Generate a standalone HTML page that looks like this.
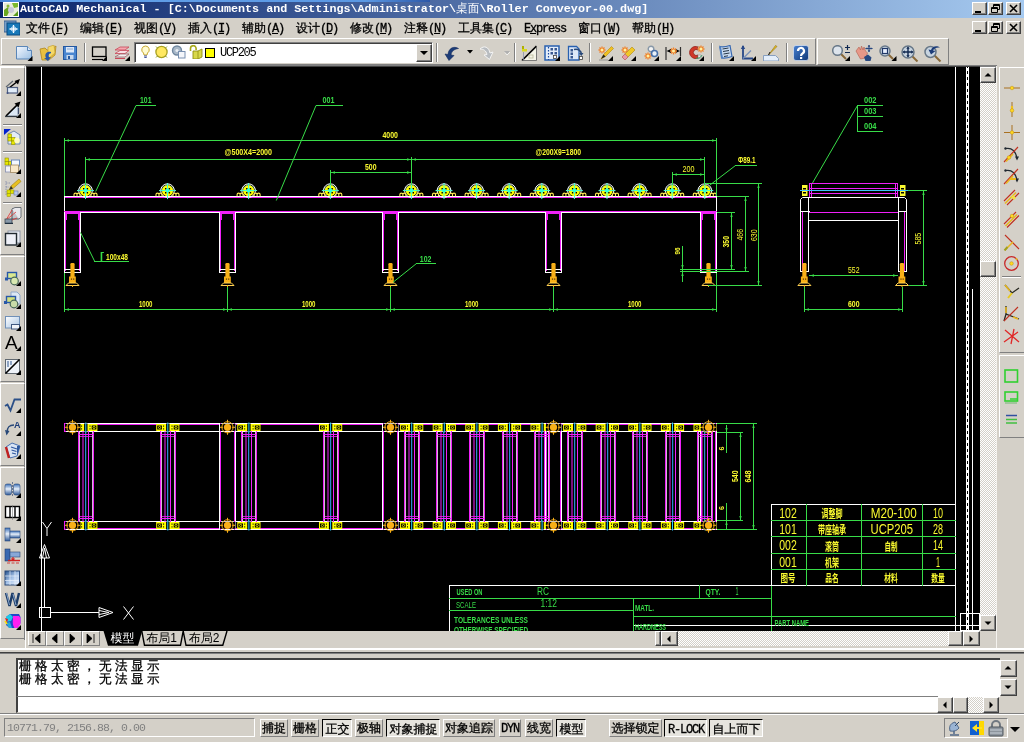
<!DOCTYPE html>
<html lang="zh"><head><meta charset="utf-8"><title>AutoCAD Mechanical - Roller Conveyor-00.dwg</title>
<style>
*{box-sizing:border-box;margin:0;padding:0}
html,body{width:1024px;height:742px;overflow:hidden;background:#d4d0c8;}
body{position:relative;font-family:"Liberation Serif","WenQuanYi Zen Hei",serif;font-size:12px;color:#000;}
.abs{position:absolute}
#title{left:0;top:0;width:1024px;height:18px;background:linear-gradient(90deg,#0a246a 0%,#a6caf0 100%);}
#titletop{left:0;top:0;width:430px;height:2px;background:linear-gradient(90deg,#4a86d8,#62a0e8 10%,#5a98e4 85%,#2c58a8);}
#titletxt{left:20px;top:2px;height:15px;line-height:15px;color:#fff;font-family:"Liberation Mono","WenQuanYi Zen Hei",monospace;font-weight:bold;font-size:11.72px;white-space:pre;letter-spacing:0}
.mono{font-family:"Liberation Mono","WenQuanYi Zen Hei",monospace}
.mi,.sb,.cmd{-webkit-text-stroke:0.3px #000}
.mi{top:20px;height:16px;line-height:16px;font-size:12px;white-space:pre;font-family:"Liberation Serif","WenQuanYi Zen Hei",serif}
.mi i{font-style:normal;font-family:"Liberation Mono",monospace;letter-spacing:-1.2px;font-size:12px}
.mi u{text-decoration:underline}
.cb{width:15px;height:13px;background:#d4d0c8;border:1px solid;border-color:#fff #404040 #404040 #fff;box-shadow:inset -1px -1px 0 #808080}
.raised{background:#d4d0c8;border:1px solid;border-color:#fff #404040 #404040 #fff;box-shadow:inset -1px -1px 0 #808080}
.dither{background-color:#eae8e4;background-image:linear-gradient(45deg,#fff 25%,transparent 25%,transparent 75%,#fff 75%),linear-gradient(45deg,#fff 25%,#d4d0c8 25%,#d4d0c8 75%,#fff 75%);background-size:2px 2px;background-position:0 0,1px 1px}
.sb{top:719px;height:18px;line-height:18px;font-size:12px;text-align:center;white-space:pre;font-family:"Liberation Mono","WenQuanYi Zen Hei",serif}
.sb i{font-style:normal;letter-spacing:-1.2px}
.sb.up{border:1px solid;border-color:#fff #808080 #808080 #fff;background:#d4d0c8}
.sb.dn{border:1px solid;border-color:#000 #fff #fff #000;background:#e6e4de;padding-left:1px;padding-top:1px}
.cmd{font-family:"Liberation Mono","WenQuanYi Zen Hei",monospace;font-size:12.5px;letter-spacing:3.5px;white-space:pre;line-height:13px}
</style></head>
<body>
<div id="root" class="abs" style="left:0;top:0;width:1024px;height:742px;will-change:transform">
<div id="title" class="abs"></div><div id="titletop" class="abs"></div>
<div id="titletxt" class="abs">AutoCAD Mechanical - [C:\Documents and Settings\Administrator\桌面\Roller Conveyor-00.dwg]</div>
<svg class="abs" style="left:3px;top:2px" width="16" height="15" viewBox="0 0 16 15"><rect x="0" y="0" width="16" height="15" fill="#e8ecd8"/><rect x=".5" y=".5" width="15" height="14" fill="none" stroke="#fff"/><path d="M1 14 L1 8 L5 5 L7 8 L4 14Z" fill="#6aa820"/><path d="M9 1 L15 1 L15 5 L11 6Z" fill="#7cb82c"/><path d="M10 14 L15 9 L15 14Z" fill="#5a9a1c"/><circle cx="8" cy="8" r="3" fill="#c8c8d8"/><circle cx="5" cy="4" r="1.5" fill="#88b838"/></svg>
<div class="abs" style="left:0;top:18px;width:1024px;height:20px;background:#d4d0c8"></div>
<svg class="abs" style="left:4px;top:20px" width="16" height="16" viewBox="0 0 16 16"><rect x="0" y="1" width="12" height="11" fill="#7aa0c8" stroke="#3a6090"/><rect x="3" y="3" width="13" height="12" fill="#1878b8" stroke="#0a4a80"/><path d="M9.5 5v8M5.5 9h8" stroke="#fff" stroke-width="1.3"/><circle cx="9.5" cy="9" r="2.3" fill="none" stroke="#cfe8ff"/></svg>
<div class="abs mi" style="left:26px">文件<i>(<u>F</u>)</i></div><div class="abs mi" style="left:80px">编辑<i>(<u>E</u>)</i></div><div class="abs mi" style="left:134px">视图<i>(<u>V</u>)</i></div><div class="abs mi" style="left:188px">插入<i>(<u>I</u>)</i></div><div class="abs mi" style="left:242px">辅助<i>(<u>A</u>)</i></div><div class="abs mi" style="left:296px">设计<i>(<u>D</u>)</i></div><div class="abs mi" style="left:350px">修改<i>(<u>M</u>)</i></div><div class="abs mi" style="left:404px">注释<i>(<u>N</u>)</i></div><div class="abs mi" style="left:458px">工具集<i>(<u>C</u>)</i></div><div class="abs mi" style="left:524px"><i>E<u>x</u>press</i></div><div class="abs mi" style="left:578px">窗口<i>(<u>W</u>)</i></div><div class="abs mi" style="left:632px">帮助<i>(<u>H</u>)</i></div>
<div class="abs cb" style="left:972px;top:2px"></div><div class="abs" style="left:975px;top:11px;width:6px;height:2px;background:#000"></div>
<div class="abs cb" style="left:988px;top:2px"></div><svg class="abs" style="left:988px;top:2px" width="15" height="13"><path d="M5.5 2.5h6v5h-6z M5 3.5h7" fill="none" stroke="#000"/><path d="M3.5 5.5h6v5h-6z" fill="#d4d0c8" stroke="#000"/><path d="M3 6.5h7" stroke="#000"/></svg>
<div class="abs cb" style="left:1006px;top:2px"></div><svg class="abs" style="left:1006px;top:2px" width="15" height="13"><path d="M4 3l7 7M11 3l-7 7" stroke="#000" stroke-width="1.6"/></svg>
<div class="abs cb" style="left:972px;top:21px"></div><div class="abs" style="left:975px;top:30px;width:6px;height:2px;background:#000"></div>
<div class="abs cb" style="left:988px;top:21px"></div><svg class="abs" style="left:988px;top:21px" width="15" height="13"><path d="M5.5 2.5h6v5h-6z M5 3.5h7" fill="none" stroke="#000"/><path d="M3.5 5.5h6v5h-6z" fill="#d4d0c8" stroke="#000"/><path d="M3 6.5h7" stroke="#000"/></svg>
<div class="abs cb" style="left:1006px;top:21px"></div><svg class="abs" style="left:1006px;top:21px" width="15" height="13"><path d="M4 3l7 7M11 3l-7 7" stroke="#000" stroke-width="1.6"/></svg>
<div class="abs" style="left:0;top:38px;width:1024px;height:27px;background:#d4d0c8"></div>
<div class="abs" style="left:1px;top:38px;width:815px;height:27px;border:1px solid;border-color:#fff #808080 #808080 #fff"></div>
<div class="abs" style="left:817px;top:38px;width:132px;height:27px;border:1px solid;border-color:#fff #808080 #808080 #fff"></div>
<svg class="abs" style="left:16px;top:45px" width="17" height="16" viewBox="0 0 17 16"><defs><linearGradient id="gn" x1="0" y1="0" x2="1" y2="1"><stop offset="0" stop-color="#f4f8ff"/><stop offset="1" stop-color="#9cc0e4"/></linearGradient></defs><path d="M.5 1.5h11l4 4v8.500h-15z" fill="url(#gn)" stroke="#5a86b8"/><path d="M11.500 1.500v4h4" fill="#dce8f6" stroke="#5a86b8"/><polygon points="16.500,11 16.500,16 11.500,16" fill="#000"/></svg>
<svg class="abs" style="left:39px;top:45px" width="18" height="16" viewBox="0 0 18 16"><path d="M1 4l5-1l2 2h3l6-4l-1 9l-6 5l-7 0z" fill="#e8c040" stroke="#b08820" stroke-width=".8"/><path d="M9 2l6-2l1 8l-7 6z" fill="#f4d868" stroke="#c09828" stroke-width=".6"/><path d="M12 7c-4-1-7 2-5 6l-2 0l4 3l3-4l-2 .2c-1-2 0-4 2-4z" fill="#2858a8"/></svg>
<svg class="abs" style="left:62px;top:45px" width="16" height="16" viewBox="0 0 16 16"><rect x="1.500" y="1.500" width="13" height="13" fill="#4a86d0" stroke="#2458a0"/><rect x="4" y="2" width="8" height="5.500" fill="#dce8f8"/><path d="M5 4h6" stroke="#88a8d0"/><rect x="4.500" y="10" width="7" height="4.500" fill="#c8d8ec"/><rect x="6" y="11" width="2" height="3" fill="#2458a0"/></svg>
<div class="abs" style="left:84px;top:43px;width:2px;height:19px;border-left:1px solid #808080;border-right:1px solid #fff"></div>
<svg class="abs" style="left:91px;top:45px" width="17" height="16" viewBox="0 0 17 16"><rect x="1.500" y="2" width="13.500" height="9.500" fill="#d4d0c8" stroke="#000" stroke-width="1.300"/><path d="M1 14.500h11" stroke="#000" stroke-width="1.200"/><polygon points="16,11 16,16 11,16" fill="#000"/></svg>
<svg class="abs" style="left:114px;top:45px" width="17" height="16" viewBox="0 0 17 16"><path d="M1 5l5-3h9l-4 3z" fill="#f4a8b0" stroke="#c84858" stroke-width=".8"/><path d="M1 8.500l5-3h9l-4 3z" fill="#f8e0e4" stroke="#c84858" stroke-width=".8"/><path d="M1 12l5-3h9l-4 3z" fill="#f0f0f0" stroke="#a06068" stroke-width=".8"/><path d="M1 13.500h10" stroke="#c84858"/><polygon points="16,11 16,16 11,16" fill="#000"/></svg>
<div class="abs" style="left:134px;top:42px;width:299px;height:21px;background:#fff;border:1px solid;border-color:#808080 #fff #fff #808080;box-shadow:inset 1px 1px 0 #404040"></div>
<svg class="abs" style="left:140px;top:45px" width="76" height="14" viewBox="0 0 76 14"><path d="M5.500 1a3.800 3.800 0 0 0 -2 7l.5 2h3l.5-2a3.800 3.800 0 0 0 -2-7z" fill="#fffbd0" stroke="#c8a830" stroke-width="1"/><path d="M4 11h3M4.300 12.500h2.400" stroke="#4858a0" stroke-width="1.200"/><circle cx="21.500" cy="7" r="5.600" fill="#ffe860" stroke="#a8a020" stroke-width="1.300"/><path d="M16 12.500l1.500-1.500M27 12.500l-1.500-1.500M16 1.500l1.500 1.500M27 1.500l-1.500 1.500" stroke="#90a028" stroke-width="1"/><circle cx="37" cy="5.500" r="4.500" fill="#a8b8c8" stroke="#7088a0" stroke-width="1.400"/><circle cx="37" cy="5.500" r="1.600" fill="#e8eef4"/><rect x="38.500" y="6.500" width="6.500" height="6.500" fill="#f4f6fa" stroke="#7890b0"/><path d="M50.500 6v-2.500a2.800 2.800 0 0 1 5.600 0v1.500" fill="none" stroke="#a8a818" stroke-width="1.600"/><path d="M53 6h5l4-2v8l-4 2h-5z" fill="#d8d848" stroke="#909010" stroke-width=".9"/><path d="M58 6v8" stroke="#909010" stroke-width=".8"/><rect x="65.500" y="3.500" width="9" height="9" fill="#ffff00" stroke="#000"/></svg>
<div class="abs" style="left:220px;top:45px;font-family:'Liberation Mono',monospace;font-size:12px;letter-spacing:-1.300px;line-height:16px;white-space:pre">UCP205</div>
<div class="abs raised" style="left:416px;top:44px;width:16px;height:18px"></div><svg class="abs" style="left:416px;top:44px" width="16" height="18" viewBox="0 0 16 18"><polygon points="4,7 12,7 8,11" fill="#000"/></svg>
<div class="abs" style="left:436px;top:43px;width:2px;height:19px;border-left:1px solid #808080;border-right:1px solid #fff"></div>
<svg class="abs" style="left:443px;top:45px" width="17" height="16" viewBox="0 0 17 16"><path d="M15.500 3.500c-5-3-10 0-10.500 6l-3-.5l4 6.500l5-5l-3-.5c.5-4 3.500-6 7.500-6.500z" fill="#1c3c78" stroke="#10285a" stroke-width=".6"/></svg>
<svg class="abs" style="left:467px;top:50px" width="6" height="4" viewBox="0 0 6 4"><polygon points="0,0 6,0 3,3.500" fill="#000"/></svg>
<svg class="abs" style="left:479px;top:45px" width="17" height="16" viewBox="0 0 17 16"><path d="M1 4c4-4 9-2 10 4l3-1l-3.500 7.500l-5.500-4.500l3 -.5c-1-4-3.500-5.500-7-5.500z" fill="#b8bcc0" stroke="#f4f4f4" stroke-width="1"/></svg>
<svg class="abs" style="left:504px;top:51px" width="6" height="4" viewBox="0 0 6 4"><polygon points="0,0 6,0 3,3.500" fill="#b0b0b0"/><path d="M1 1.500l2 2.500l3-3" stroke="#fff" fill="none" stroke-width=".7"/></svg>
<div class="abs" style="left:514px;top:43px;width:2px;height:19px;border-left:1px solid #808080;border-right:1px solid #fff"></div>
<svg class="abs" style="left:521px;top:45px" width="16" height="16" viewBox="0 0 16 16"><path d="M1 15.500h14v-14z" fill="#f4f4e8"/><path d="M1 15.500L15.500 1" stroke="#000" stroke-width="1.600"/><path d="M1 15.500h14.500V1" fill="none" stroke="#606060" stroke-width=".8"/><rect x="1" y="1" width="2" height="5" fill="#b0b000"/><rect x="1" y="4" width="5" height="2.500" fill="#d8d820"/><path d="M2.500 7v8" stroke="#8890a8" stroke-width=".8"/><rect x="8" y="10" width="4" height="3" fill="none" stroke="#b8b898" stroke-width=".8"/></svg>
<svg class="abs" style="left:544px;top:45px" width="17" height="16" viewBox="0 0 17 16"><rect x="1" y="1" width="14" height="14" fill="#e4eefa" stroke="#2860b0" stroke-width="1.500"/><path d="M4.500 2v13" stroke="#1848a0" stroke-width="1.200" stroke-dasharray="1.500 1.500"/><g fill="#385890"><rect x="6.500" y="3" width="2.500" height="2.500"/><rect x="10.500" y="3" width="2.500" height="2.500"/><rect x="6.500" y="7" width="2.500" height="2.500"/><rect x="10.500" y="7" width="2.500" height="2.500"/></g><rect x="9.500" y="10.500" width="3" height="3" fill="#fff" stroke="#404040" stroke-width=".8"/><polygon points="16,11 16,16 11,16" fill="#000"/></svg>
<svg class="abs" style="left:567px;top:45px" width="17" height="16" viewBox="0 0 17 16"><path d="M1.500 1.500h8l2.500 2.500v11h-10.500z" fill="#dce8f8" stroke="#2860b0" stroke-width="1.300"/><g fill="#385890"><rect x="3.500" y="4" width="2.500" height="2.500"/><rect x="3.500" y="7.500" width="2.500" height="2.500"/><rect x="3.500" y="11" width="2.500" height="2.500"/></g><path d="M7 4.500c4-1 7 1 7.500 4.500" fill="none" stroke="#284878" stroke-width="1.600"/><polygon points="12,8 16.500,8 14.300,11" fill="#284878"/><rect x="12.500" y="11.500" width="3" height="3" fill="#fff" stroke="#404040" stroke-width=".8"/></svg>
<div class="abs" style="left:589px;top:43px;width:2px;height:19px;border-left:1px solid #808080;border-right:1px solid #fff"></div>
<svg class="abs" style="left:597px;top:45px" width="17" height="16" viewBox="0 0 17 16"><g stroke="#f08028" stroke-width="1.300"><path d="M5 1.5v7M1.5 5h7M2.5 2.5l5 5M7.5 2.5l-5 5"/></g><circle cx="5" cy="5" r="1.500" fill="#fff0a0"/><path d="M4 14l2.500-4.500l8-8l2 2l-8 8z" fill="#f0c020" stroke="#b08810" stroke-width=".6"/><path d="M4 14l2.500-4.500l2 2z" fill="#202020"/><path d="M2 15h9" stroke="#808080" stroke-width="1.500" opacity=".5"/><polygon points="16,11 16,16 11,16" fill="#000"/></svg>
<svg class="abs" style="left:620px;top:45px" width="17" height="16" viewBox="0 0 17 16"><g stroke="#f08028" stroke-width="1.300"><path d="M5 1.5v7M1.5 5h7M2.5 2.5l5 5M7.5 2.5l-5 5"/></g><circle cx="5" cy="5" r="1.500" fill="#fff0a0"/><path d="M2 12l10-10l3 3l-10 10z" fill="#f0c828" stroke="#b08810" stroke-width=".6"/><path d="M2 12l3-3l3 3l-3 3z" fill="#e898a8" stroke="#b06070" stroke-width=".6"/><polygon points="16,11 16,16 11,16" fill="#000"/></svg>
<svg class="abs" style="left:643px;top:45px" width="17" height="16" viewBox="0 0 17 16"><g stroke="#f08028" stroke-width="1.300"><path d="M5 7.5v7M1.5 11h7M2.5 8.5l5 5M7.5 8.5l-5 5"/></g><circle cx="5" cy="11" r="1.500" fill="#fff0a0"/><circle cx="8" cy="4" r="2.800" fill="#f4f4f4" stroke="#8898a8" stroke-width="1.400"/><circle cx="11.500" cy="8.500" r="3" fill="#e8f0f8" stroke="#4870a8" stroke-width="1.600"/><polygon points="16,11 16,16 11,16" fill="#000"/></svg>
<svg class="abs" style="left:665px;top:45px" width="17" height="16" viewBox="0 0 17 16"><path d="M1 2v13M15.500 2v9" stroke="#303030" stroke-width="1.200"/><polygon points="1.500,6 6,4 6,8" fill="#000"/><polygon points="15,6 10.500,4 10.500,8" fill="#000"/><g stroke="#f08028" stroke-width="1.300"><path d="M8.5 2.5v7M5 6h7M6 3.5l5 5M11 3.5l-5 5"/></g><circle cx="8.5" cy="6" r="1.500" fill="#fff0a0"/><polygon points="16,11 16,16 11,16" fill="#000"/></svg>
<svg class="abs" style="left:688px;top:45px" width="17" height="16" viewBox="0 0 17 16"><path d="M10 2a6 6 0 1 0 0 11l0-3a3 3 0 1 1 0-5z" fill="#d03828" stroke="#902018" stroke-width=".8"/><path d="M10 2h3v3h-3zM10 10h3v3h-3z" fill="#e8e8e8" stroke="#808080" stroke-width=".5"/><path d="M8 13c3 1 5-1 6-3" stroke="#30a060" fill="none"/><g stroke="#f08028" stroke-width="1.300"><path d="M13 0.5v7M9.5 4h7M10.5 1.5l5 5M15.5 1.5l-5 5"/></g><circle cx="13" cy="4" r="1.500" fill="#fff0a0"/><polygon points="16,11 16,16 11,16" fill="#000"/></svg>
<div class="abs" style="left:711px;top:43px;width:2px;height:19px;border-left:1px solid #808080;border-right:1px solid #fff"></div>
<svg class="abs" style="left:718px;top:45px" width="17" height="16" viewBox="0 0 17 16"><path d="M2 1.500c3 1 7 0 10-1l2 11c-3 1-7 2-10 1.500z" fill="#c8daf0" stroke="#3868b0" stroke-width="1.200"/><path d="M4.500 4l6-1M5 6.500l6-1M5.500 9l6-1M6 11.500l4-.7" stroke="#283848" stroke-width="1"/><path d="M2 1.500l2 12" stroke="#5080c0" stroke-width="1.800"/><polygon points="16,11 16,16 11,16" fill="#000"/></svg>
<svg class="abs" style="left:740px;top:45px" width="17" height="16" viewBox="0 0 17 16"><path d="M3 1v12.500h10" fill="none" stroke="#284888" stroke-width="1.800"/><polygon points="3,0 .8,4 5.200,4" fill="#284888"/><path d="M3 13.500l8-8" stroke="#7890b8" stroke-width="1.200"/><polygon points="16,11 16,16 11,16" fill="#000"/></svg>
<svg class="abs" style="left:762px;top:45px" width="19" height="16" viewBox="0 0 19 16"><path d="M1.500 10.500h12l3 3v2.500h-15z" fill="#e4eefa" stroke="#88a0c0"/><path d="M6.500 10l7-9.500l1.500 1z" fill="#e8c020" stroke="#907010" stroke-width=".6"/><path d="M6.500 10l1.500-3" stroke="#202020" stroke-width="1"/></svg>
<div class="abs" style="left:786px;top:43px;width:2px;height:19px;border-left:1px solid #808080;border-right:1px solid #fff"></div>
<svg class="abs" style="left:793px;top:45px" width="16" height="16" viewBox="0 0 16 16"><defs><linearGradient id="gh" x1="0" y1="0" x2="1" y2="1"><stop offset="0" stop-color="#4880d0"/><stop offset="1" stop-color="#103878"/></linearGradient></defs><rect x=".5" y=".5" width="15" height="15" rx="2.500" fill="url(#gh)" stroke="#e8f0ff" stroke-width=".6"/><path d="M5 6a3 3 0 1 1 4.500 2.500c-1 .6-1.500 1-1.500 2.500" fill="none" stroke="#fff" stroke-width="2.200"/><rect x="7" y="12" width="2.200" height="2" fill="#fff"/></svg>
<svg class="abs" style="left:832px;top:45px" width="19" height="16" viewBox="0 0 19 16"><path d="M9 9L14 14" stroke="#886838" stroke-width="2"/><circle cx="5.5" cy="5.5" r="4.8" fill="#dde4ec" stroke="#687888" stroke-width="1.500"/><path d="M13 2.500h5M15.500 0v5M13 7.500h5" stroke="#102850" stroke-width="1.200"/><polygon points="18,11 18,16 13,16" fill="#000"/></svg>
<svg class="abs" style="left:855px;top:45px" width="18" height="16" viewBox="0 0 18 16"><path d="M1 6l3-4l1.500 3l1-4l1.500 4l1-3l1.500 4l2 2l-2 5l-5 1z" fill="#e89888" stroke="#b86858" stroke-width=".7"/><path d="M9 12l4-2.500l3.500 3l-1 3.500h-5z" fill="#284880"/><path d="M14 0v7M10.500 3.500h7" stroke="#284880" stroke-width="1.200"/><path d="M14 0l-1.300 1.800h2.600zM14 7l-1.300-1.800h2.600zM10.500 3.500l1.800-1.300v2.600zM17.500 3.500l-1.800-1.300v2.600z" fill="#284880"/></svg>
<svg class="abs" style="left:879px;top:45px" width="18" height="16" viewBox="0 0 18 16"><path d="M9.5 9.5L14 14" stroke="#886838" stroke-width="2"/><circle cx="6" cy="6" r="5" fill="#c8d4e0" stroke="#687888" stroke-width="1.500"/><rect x="3.500" y="3.500" width="5" height="5" fill="#e8f0ff" stroke="#203868" stroke-width="1.200"/><polygon points="17.500,11 17.500,16 12.500,16" fill="#000"/></svg>
<svg class="abs" style="left:901px;top:45px" width="19" height="17" viewBox="0 0 19 17"><path d="M11 11L16.5 16.5" stroke="#886838" stroke-width="2"/><circle cx="7" cy="7" r="6" fill="#c8d4e0" stroke="#687888" stroke-width="1.500"/><path d="M7 2.500v9M2.500 7h9" stroke="#102850" stroke-width="1.400"/><path d="M7 1.500l-1.700 2.200h3.400zM7 12.500l-1.700-2.200h3.400zM1.500 7l2.200-1.700v3.400zM12.500 7l-2.200-1.700v3.400z" fill="#102850"/></svg>
<svg class="abs" style="left:924px;top:45px" width="19" height="17" viewBox="0 0 19 17"><path d="M10 10L16.5 16.5" stroke="#886838" stroke-width="2"/><circle cx="6.5" cy="7" r="5.5" fill="#c8d4e0" stroke="#687888" stroke-width="1.500"/><path d="M16 2.500c-3-2.500-8-1.500-9 2.500l-2.500-.5l2.500 5l4.500-3.500l-2.500-.5c1-2.500 4-3.500 7-3z" fill="#1c3c78"/></svg>

<div class="abs" style="left:25px;top:65px;width:972px;height:583px;background:#d4d0c8;border-left:1px solid #fff;border-top:2px solid #808080"></div>
<div class="abs" style="left:26px;top:66px;width:954px;height:565px;background:#404040"></div>
<div class="abs" style="left:27px;top:67px;width:953px;height:564px;background:#000"></div>
<svg class="abs" style="left:0;top:0;will-change:transform" width="1024" height="742" viewBox="0 0 1024 742">
<defs><clipPath id="dc"><rect x="27" y="67" width="953" height="564"/></clipPath>
<g id="brg"><circle cx="0" cy="0" r="5.6" fill="#ffff00"/><circle cx="0" cy="0" r="6.8" fill="none" stroke="#fff" stroke-width="1"/><path d="M-2.5 -2.5h1.4v1.4h-1.4zM1.2 -2.5h1.4v1.4h-1.4zM-2.5 1.4h1.4v1.4h-1.4zM1.2 1.4h1.4v1.4h-1.4z" fill="#000"/><circle cx="0" cy="0" r="2" fill="#00ffff"/><path d="M-8.5 0h17M0 -7.5v16" stroke="#40ffd0" stroke-width="1"/><path d="M-8 0L0 -7L8 0" fill="none" stroke="#9ff" stroke-width=".6" opacity=".7"/><g fill="none" stroke="#ffe850" stroke-width="1.100"><path d="M-11.500 5.600v-1.600a1.500 1.500 0 0 1 3 0v1.600M-8.500 5.600v-1.600a1.500 1.500 0 0 1 3 0v1.600M11.500 5.600v-1.600a1.500 1.500 0 0 0 -3 0v1.600M8.500 5.600v-1.600a1.500 1.500 0 0 0 -3 0v1.600"/></g></g>
<g id="foot"><rect x="-2.100" y="0" width="4.200" height="15" rx="1.200" fill="#f8b018"/><rect x="-3.5" y="13.500" width="6.800" height="6.500" fill="#f8b018"/><rect x="-1.600" y="15.500" width="1.200" height="1.200" fill="#503000"/><rect x=".6" y="15.500" width="1.200" height="1.200" fill="#503000"/><path d="M-6.500 22.500L-4 20H4L6.500 22.500z" fill="none" stroke="#ffd050" stroke-width="1"/><path d="M0 22v2" stroke="#f8b018"/></g>
<g id="pb"><rect x="-11.600" y="-3.500" width="23.200" height="7" fill="#ffff00"/><rect x="-1.700" y="-4" width="3.400" height="8" fill="#000"/><rect x="-10.600" y="-2" width="4.700" height="4" fill="#000"/><rect x="5.900" y="-2" width="4.700" height="4" fill="#000"/><g fill="#000"><rect x="-4.700" y="-2" width="1" height="1.200"/><rect x="-4.700" y=".8" width="1" height="1.200"/><rect x="3.700" y="-2" width="1" height="1.200"/><rect x="3.700" y=".8" width="1" height="1.200"/></g><circle cx="-8.200" cy="0" r="1.100" fill="none" stroke="#ffff00" stroke-width=".8"/><circle cx="8.200" cy="0" r="1.100" fill="none" stroke="#ffff00" stroke-width=".8"/><path d="M0 -5v10" stroke="#30d0ff"/></g>
<g id="pf"><rect x="-7.500" y="-3.500" width="15.500" height="7" fill="#000"/><circle r="3.600" fill="#f8b018"/><circle r="5.600" fill="none" stroke="#f8b018" stroke-width="1"/><path d="M-7.500 0h3M4.500 0h3M0 -7.500v3M0 4.500v3" stroke="#f8b018" stroke-width="1"/></g>
</defs>
<g clip-path="url(#dc)">
<rect x="41" y="67" width="1" height="565" fill="#ffffff"/><rect x="955" y="67" width="1" height="565" fill="#ffffff"/><rect x="972" y="289" width="1" height="343" fill="#ffffff"/><rect x="966" y="67" width="3" height="564" fill="#fff"/><line x1="967.5" y1="67" x2="967.5" y2="631" stroke="#000" stroke-width="1" stroke-dasharray="3 3" stroke-dashoffset="2"/>
<rect x="64" y="196" width="653" height="1" fill="#ffffff"/><rect x="64" y="197" width="653" height="1" fill="#f020f8"/><rect x="64" y="196" width="1" height="17" fill="#ffffff"/><rect x="716" y="196" width="1" height="17" fill="#ffffff"/><rect x="64" y="211" width="653" height="1" fill="#f020f8"/><rect x="64" y="212" width="653" height="1" fill="#ffffff"/><rect x="64" y="211" width="17" height="3" fill="#f020f8"/><rect x="64" y="212" width="1" height="61" fill="#ffffff"/><rect x="80" y="212" width="1" height="61" fill="#ffffff"/><rect x="65" y="212" width="1" height="59" fill="#f020f8"/><rect x="79" y="212" width="1" height="59" fill="#f020f8"/><rect x="65" y="212" width="2" height="8" fill="#f020f8"/><rect x="78" y="212" width="2" height="8" fill="#f020f8"/><rect x="64" y="269" width="17" height="1" fill="#ffffff"/><rect x="64" y="272" width="17" height="1" fill="#ffffff"/><rect x="219" y="211" width="17" height="3" fill="#f020f8"/><rect x="219" y="212" width="1" height="61" fill="#ffffff"/><rect x="235" y="212" width="1" height="61" fill="#ffffff"/><rect x="220" y="212" width="1" height="59" fill="#f020f8"/><rect x="234" y="212" width="1" height="59" fill="#f020f8"/><rect x="220" y="212" width="2" height="8" fill="#f020f8"/><rect x="233" y="212" width="2" height="8" fill="#f020f8"/><rect x="219" y="269" width="17" height="1" fill="#ffffff"/><rect x="219" y="272" width="17" height="1" fill="#ffffff"/><rect x="382" y="211" width="17" height="3" fill="#f020f8"/><rect x="382" y="212" width="1" height="61" fill="#ffffff"/><rect x="398" y="212" width="1" height="61" fill="#ffffff"/><rect x="383" y="212" width="1" height="59" fill="#f020f8"/><rect x="397" y="212" width="1" height="59" fill="#f020f8"/><rect x="383" y="212" width="2" height="8" fill="#f020f8"/><rect x="396" y="212" width="2" height="8" fill="#f020f8"/><rect x="382" y="269" width="17" height="1" fill="#ffffff"/><rect x="382" y="272" width="17" height="1" fill="#ffffff"/><rect x="545" y="211" width="17" height="3" fill="#f020f8"/><rect x="545" y="212" width="1" height="61" fill="#ffffff"/><rect x="561" y="212" width="1" height="61" fill="#ffffff"/><rect x="546" y="212" width="1" height="59" fill="#f020f8"/><rect x="560" y="212" width="1" height="59" fill="#f020f8"/><rect x="546" y="212" width="2" height="8" fill="#f020f8"/><rect x="559" y="212" width="2" height="8" fill="#f020f8"/><rect x="545" y="269" width="17" height="1" fill="#ffffff"/><rect x="545" y="272" width="17" height="1" fill="#ffffff"/><rect x="700" y="211" width="17" height="3" fill="#f020f8"/><rect x="700" y="212" width="1" height="61" fill="#ffffff"/><rect x="716" y="212" width="1" height="61" fill="#ffffff"/><rect x="701" y="212" width="1" height="59" fill="#f020f8"/><rect x="715" y="212" width="1" height="59" fill="#f020f8"/><rect x="701" y="212" width="2" height="8" fill="#f020f8"/><rect x="714" y="212" width="2" height="8" fill="#f020f8"/><rect x="700" y="269" width="17" height="1" fill="#ffffff"/><rect x="700" y="272" width="17" height="1" fill="#ffffff"/><use href="#foot" x="72.5" y="263"/><use href="#foot" x="227.5" y="263"/><use href="#foot" x="390.5" y="263"/><use href="#foot" x="553.5" y="263"/><use href="#foot" x="708.5" y="263"/>
<use href="#brg" x="85.5" y="190.6"/><use href="#brg" x="167.5" y="190.6"/><use href="#brg" x="248.6" y="190.6"/><use href="#brg" x="330.3" y="190.6"/><use href="#brg" x="411.4" y="190.6"/><use href="#brg" x="444" y="190.6"/><use href="#brg" x="476.6" y="190.6"/><use href="#brg" x="509.2" y="190.6"/><use href="#brg" x="541.8" y="190.6"/><use href="#brg" x="574.4" y="190.6"/><use href="#brg" x="607" y="190.6"/><use href="#brg" x="639.6" y="190.6"/><use href="#brg" x="672.2" y="190.6"/><use href="#brg" x="704.8" y="190.6"/>
<rect x="64" y="138" width="1" height="58" fill="#38dc48"/><rect x="716" y="138" width="1" height="58" fill="#38dc48"/><rect x="64" y="140" width="653" height="1" fill="#38dc48"/><path d="M65 140.5l4 -1.2v2.4z" fill="#38dc48"/><path d="M716 140.5l-4 -1.2v2.4z" fill="#38dc48"/><text x="382.5" y="137.9" textLength="15.5" lengthAdjust="spacingAndGlyphs" font-size="9.3" font-family="'Liberation Sans',sans-serif" font-weight="bold" fill="#fafa30">4000</text><rect x="85" y="157" width="1" height="28" fill="#38dc48"/><rect x="704" y="157" width="1" height="28" fill="#38dc48"/><rect x="411" y="157" width="1" height="28" fill="#38dc48"/><rect x="85" y="159" width="620" height="1" fill="#38dc48"/><path d="M86 159.5l4 -1.2v2.4z" fill="#38dc48"/><path d="M704 159.5l-4 -1.2v2.4z" fill="#38dc48"/><path d="M411 159.5l-4 -1.2v2.4z" fill="#38dc48"/><path d="M412 159.5l4 -1.2v2.4z" fill="#38dc48"/><text x="224.5" y="154.9" textLength="47.5" lengthAdjust="spacingAndGlyphs" font-size="9.3" font-family="'Liberation Sans',sans-serif" font-weight="bold" fill="#fafa30">@500X4=2000</text><text x="535.5" y="154.7" textLength="45.5" lengthAdjust="spacingAndGlyphs" font-size="9.3" font-family="'Liberation Sans',sans-serif" font-weight="bold" fill="#fafa30">@200X9=1800</text><rect x="330" y="170" width="1" height="15" fill="#38dc48"/><rect x="330" y="172" width="82" height="1" fill="#38dc48"/><path d="M331 172.5l4 -1.2v2.4z" fill="#38dc48"/><path d="M411 172.5l-4 -1.2v2.4z" fill="#38dc48"/><text x="365" y="169.9" textLength="11.5" lengthAdjust="spacingAndGlyphs" font-size="9.3" font-family="'Liberation Sans',sans-serif" font-weight="bold" fill="#fafa30">500</text><rect x="672" y="172" width="1" height="13" fill="#38dc48"/><rect x="672" y="174" width="33" height="1" fill="#38dc48"/><path d="M673 174.5l4 -1.2v2.4z" fill="#38dc48"/><path d="M704 174.5l-4 -1.2v2.4z" fill="#38dc48"/><text x="682.5" y="172.2" textLength="12" lengthAdjust="spacingAndGlyphs" font-size="8.2" font-family="'Liberation Sans',sans-serif" font-weight="normal" fill="#fafa30">200</text><line x1="136" y1="105.5" x2="95.7" y2="191.5" stroke="#38dc48" stroke-width="1"/><rect x="136" y="105" width="20" height="1" fill="#38dc48"/><text x="140" y="102.9" textLength="11.5" lengthAdjust="spacingAndGlyphs" font-size="9.3" font-family="'Liberation Sans',sans-serif" font-weight="bold" fill="#38dc48">101</text><line x1="316" y1="105.5" x2="276.3" y2="200.5" stroke="#38dc48" stroke-width="1"/><rect x="316" y="105" width="27" height="1" fill="#38dc48"/><text x="322.5" y="102.9" textLength="12" lengthAdjust="spacingAndGlyphs" font-size="9.3" font-family="'Liberation Sans',sans-serif" font-weight="bold" fill="#38dc48">001</text><line x1="735.5" y1="165.5" x2="710" y2="185" stroke="#38dc48" stroke-width="1"/><rect x="735" y="165" width="22" height="1" fill="#38dc48"/><text x="738" y="162.9" textLength="17.5" lengthAdjust="spacingAndGlyphs" font-size="9.3" font-family="'Liberation Sans',sans-serif" font-weight="bold" fill="#fafa30">Φ89.1</text><line x1="80.5" y1="232.5" x2="94.5" y2="261" stroke="#38dc48" stroke-width="1"/><rect x="94" y="261" width="35" height="1" fill="#38dc48"/><text x="100" y="260.2" textLength="4" lengthAdjust="spacingAndGlyphs" font-size="10.5" font-family="'Liberation Sans',sans-serif" font-weight="bold" fill="#38dc48">[</text><text x="106" y="260" textLength="22" lengthAdjust="spacingAndGlyphs" font-size="9.3" font-family="'Liberation Sans',sans-serif" font-weight="bold" fill="#fafa30">100x48</text><line x1="393" y1="282.3" x2="416.5" y2="263.5" stroke="#38dc48" stroke-width="1"/><rect x="416" y="263" width="20" height="1" fill="#38dc48"/><text x="419.8" y="262" textLength="11.6" lengthAdjust="spacingAndGlyphs" font-size="9.3" font-family="'Liberation Sans',sans-serif" font-weight="bold" fill="#38dc48">102</text>
<rect x="706" y="183" width="56" height="1" fill="#38dc48"/><rect x="717" y="196" width="32" height="1" fill="#38dc48"/><rect x="717" y="212" width="18" height="1" fill="#38dc48"/><rect x="680" y="269" width="55" height="1" fill="#38dc48"/><rect x="680" y="271" width="69" height="1" fill="#38dc48"/><rect x="708" y="285" width="54" height="1" fill="#38dc48"/><rect x="731" y="212" width="1" height="58" fill="#38dc48"/><path d="M731.5 213l-1.2 4h2.4z" fill="#38dc48"/><path d="M731.5 269l-1.2 -4h2.4z" fill="#38dc48"/><rect x="745" y="196" width="1" height="76" fill="#38dc48"/><path d="M745.5 197l-1.2 4h2.4z" fill="#38dc48"/><path d="M745.5 271l-1.2 -4h2.4z" fill="#38dc48"/><rect x="758" y="183" width="1" height="103" fill="#38dc48"/><path d="M758.5 184l-1.2 4h2.4z" fill="#38dc48"/><path d="M758.5 285l-1.2 -4h2.4z" fill="#38dc48"/><rect x="682" y="246" width="1" height="36" fill="#38dc48"/><path d="M682.5 269l-1.2 -4h2.4z" fill="#38dc48"/><path d="M682.5 272l-1.2 4h2.4z" fill="#38dc48"/><text x="729" y="247.5" textLength="11.5" lengthAdjust="spacingAndGlyphs" font-size="9.3" font-family="'Liberation Sans',sans-serif" font-weight="bold" fill="#fafa30" transform="rotate(-90 729 247.5)">350</text><text x="743.2" y="240.5" textLength="11.5" lengthAdjust="spacingAndGlyphs" font-size="9.3" font-family="'Liberation Sans',sans-serif" font-weight="normal" fill="#fafa30" transform="rotate(-90 743.2 240.5)">466</text><text x="756.7" y="241" textLength="11.5" lengthAdjust="spacingAndGlyphs" font-size="9.3" font-family="'Liberation Sans',sans-serif" font-weight="normal" fill="#fafa30" transform="rotate(-90 756.7 241)">630</text><text x="679.7" y="254.5" textLength="7" lengthAdjust="spacingAndGlyphs" font-size="7.5" font-family="'Liberation Sans',sans-serif" font-weight="bold" fill="#fafa30" transform="rotate(-90 679.7 254.5)">96</text><rect x="64" y="309" width="653" height="1" fill="#38dc48"/><rect x="64" y="273" width="1" height="39" fill="#38dc48"/><rect x="227" y="287" width="1" height="25" fill="#38dc48"/><rect x="390" y="287" width="1" height="25" fill="#38dc48"/><rect x="553" y="287" width="1" height="25" fill="#38dc48"/><rect x="716" y="273" width="1" height="39" fill="#38dc48"/><path d="M65 309.5l4 -1.2v2.4z" fill="#38dc48"/><path d="M227 309.5l-4 -1.2v2.4z" fill="#38dc48"/><path d="M228 309.5l4 -1.2v2.4z" fill="#38dc48"/><path d="M390 309.5l-4 -1.2v2.4z" fill="#38dc48"/><path d="M391 309.5l4 -1.2v2.4z" fill="#38dc48"/><path d="M553 309.5l-4 -1.2v2.4z" fill="#38dc48"/><path d="M554 309.5l4 -1.2v2.4z" fill="#38dc48"/><path d="M716 309.5l-4 -1.2v2.4z" fill="#38dc48"/><text x="139" y="307.4" textLength="13.5" lengthAdjust="spacingAndGlyphs" font-size="9.3" font-family="'Liberation Sans',sans-serif" font-weight="bold" fill="#fafa30">1000</text><text x="302" y="307.4" textLength="13.5" lengthAdjust="spacingAndGlyphs" font-size="9.3" font-family="'Liberation Sans',sans-serif" font-weight="bold" fill="#fafa30">1000</text><text x="465" y="307.4" textLength="13.5" lengthAdjust="spacingAndGlyphs" font-size="9.3" font-family="'Liberation Sans',sans-serif" font-weight="bold" fill="#fafa30">1000</text><text x="628" y="307.4" textLength="13.5" lengthAdjust="spacingAndGlyphs" font-size="9.3" font-family="'Liberation Sans',sans-serif" font-weight="bold" fill="#fafa30">1000</text>
<rect x="809.5" y="183.5" width="88" height="14" fill="none" stroke="#f020f8"/><rect x="809" y="188" width="89" height="1" fill="#f020f8"/><rect x="809" y="193" width="89" height="1" fill="#f020f8"/><rect x="811" y="183" width="1" height="15" fill="#f020f8"/><rect x="895" y="183" width="1" height="15" fill="#f020f8"/><rect x="802" y="185" width="5.5" height="11" fill="#fafa30"/><rect x="900" y="185" width="5.5" height="11" fill="#fafa30"/><rect x="803" y="188" width="3" height="1.5" fill="#000"/><rect x="901" y="188" width="3" height="1.5" fill="#000"/><rect x="803" y="192" width="3" height="1.5" fill="#000"/><rect x="901" y="192" width="3" height="1.5" fill="#000"/><rect x="800" y="190" width="108" height="1" fill="#40c0ff"/><path d="M800.5 271.5V199.5L802.5 197.5H904.5L906.5 199.5V271.5" fill="none" stroke="#fff"/><rect x="800" y="211" width="10" height="1" fill="#ffffff"/><rect x="898" y="211" width="9" height="1" fill="#ffffff"/><rect x="809" y="212" width="90" height="1" fill="#f020f8"/><rect x="808" y="198" width="1" height="74" fill="#ffffff"/><rect x="898" y="198" width="1" height="74" fill="#ffffff"/><rect x="802" y="212" width="1" height="59" fill="#f020f8"/><rect x="904" y="212" width="1" height="59" fill="#f020f8"/><rect x="808" y="220" width="91" height="1" fill="#ffffff"/><rect x="800" y="271" width="9" height="1" fill="#ffffff"/><rect x="898" y="271" width="9" height="1" fill="#ffffff"/><use href="#foot" x="804.4" y="263"/><use href="#foot" x="902" y="263"/><rect x="809" y="275" width="89" height="1" fill="#38dc48"/><path d="M810 275.5l4 -1.2v2.4z" fill="#38dc48"/><path d="M897 275.5l-4 -1.2v2.4z" fill="#38dc48"/><text x="848" y="272.9" textLength="11.5" lengthAdjust="spacingAndGlyphs" font-size="9.3" font-family="'Liberation Sans',sans-serif" font-weight="normal" fill="#fafa30">552</text><rect x="804" y="287" width="1" height="25" fill="#38dc48"/><rect x="902" y="287" width="1" height="25" fill="#38dc48"/><rect x="804" y="309" width="99" height="1" fill="#38dc48"/><path d="M805 309.5l4 -1.2v2.4z" fill="#38dc48"/><path d="M902 309.5l-4 -1.2v2.4z" fill="#38dc48"/><text x="848" y="307.4" textLength="11.5" lengthAdjust="spacingAndGlyphs" font-size="9.3" font-family="'Liberation Sans',sans-serif" font-weight="bold" fill="#fafa30">600</text><rect x="908" y="190" width="19" height="1" fill="#38dc48"/><rect x="909" y="285" width="18" height="1" fill="#38dc48"/><rect x="923" y="190" width="1" height="96" fill="#38dc48"/><path d="M923.5 191l-1.2 4h2.4z" fill="#38dc48"/><path d="M923.5 285l-1.2 -4h2.4z" fill="#38dc48"/><text x="921.2" y="244.5" textLength="11.8" lengthAdjust="spacingAndGlyphs" font-size="9.3" font-family="'Liberation Sans',sans-serif" font-weight="normal" fill="#fafa30" transform="rotate(-90 921.2 244.5)">585</text><line x1="857.5" y1="105.5" x2="812.5" y2="183" stroke="#38dc48" stroke-width="1"/><rect x="857" y="105" width="1" height="27" fill="#38dc48"/><rect x="857" y="105" width="26" height="1" fill="#38dc48"/><rect x="857" y="116" width="26" height="1" fill="#38dc48"/><rect x="857" y="131" width="26" height="1" fill="#38dc48"/><text x="864" y="102.9" textLength="12.5" lengthAdjust="spacingAndGlyphs" font-size="9.3" font-family="'Liberation Sans',sans-serif" font-weight="bold" fill="#38dc48">002</text><text x="864" y="114.2" textLength="12.5" lengthAdjust="spacingAndGlyphs" font-size="9.3" font-family="'Liberation Sans',sans-serif" font-weight="bold" fill="#38dc48">003</text><text x="864" y="128.7" textLength="12.5" lengthAdjust="spacingAndGlyphs" font-size="9.3" font-family="'Liberation Sans',sans-serif" font-weight="bold" fill="#38dc48">004</text>
<rect x="64" y="423" width="653" height="1" fill="#ffffff"/><rect x="64" y="424" width="653" height="1" fill="#f020f8"/><rect x="64" y="431" width="653" height="1" fill="#ffffff"/><rect x="64" y="521" width="653" height="1" fill="#ffffff"/><rect x="64" y="528" width="653" height="1" fill="#f020f8"/><rect x="64" y="529" width="653" height="1" fill="#ffffff"/><rect x="64" y="423" width="2" height="9" fill="#f020f8"/><rect x="64" y="521" width="2" height="9" fill="#f020f8"/><rect x="716" y="423" width="1" height="9" fill="#ffffff"/><rect x="716" y="521" width="1" height="9" fill="#ffffff"/><rect x="219" y="423" width="1" height="107" fill="#ffffff"/><rect x="235" y="423" width="1" height="107" fill="#ffffff"/><rect x="220" y="423" width="1" height="107" fill="#f020f8"/><rect x="234" y="423" width="1" height="107" fill="#f020f8"/><rect x="382" y="423" width="1" height="107" fill="#ffffff"/><rect x="398" y="423" width="1" height="107" fill="#ffffff"/><rect x="383" y="423" width="1" height="107" fill="#f020f8"/><rect x="397" y="423" width="1" height="107" fill="#f020f8"/><rect x="545" y="423" width="1" height="107" fill="#ffffff"/><rect x="561" y="423" width="1" height="107" fill="#ffffff"/><rect x="546" y="423" width="1" height="107" fill="#f020f8"/><rect x="560" y="423" width="1" height="107" fill="#f020f8"/><rect x="700" y="423" width="1" height="107" fill="#ffffff"/><rect x="716" y="423" width="1" height="107" fill="#ffffff"/><rect x="701" y="423" width="1" height="107" fill="#f020f8"/><rect x="715" y="423" width="1" height="107" fill="#f020f8"/><rect x="78" y="431" width="1.5" height="91" fill="#f020f8"/><rect x="92.5" y="431" width="1.5" height="91" fill="#f020f8"/><rect x="79" y="431" width="0.7" height="91" fill="#ffffff"/><rect x="92.3" y="431" width="0.7" height="91" fill="#ffffff"/><rect x="82.5" y="431" width="1" height="91" fill="#f020f8"/><rect x="88" y="431" width="1" height="91" fill="#f020f8"/><rect x="85.2" y="424" width="1" height="105" fill="#30b0ff"/><rect x="78" y="434" width="16" height="1" fill="#f020f8"/><rect x="78" y="518" width="16" height="1" fill="#f020f8"/><rect x="80" y="436" width="12" height="0.8" fill="#f020f8"/><rect x="80" y="516" width="12" height="0.8" fill="#f020f8"/><rect x="160" y="431" width="1.5" height="91" fill="#f020f8"/><rect x="174.5" y="431" width="1.5" height="91" fill="#f020f8"/><rect x="161" y="431" width="0.7" height="91" fill="#ffffff"/><rect x="174.3" y="431" width="0.7" height="91" fill="#ffffff"/><rect x="164.5" y="431" width="1" height="91" fill="#f020f8"/><rect x="170" y="431" width="1" height="91" fill="#f020f8"/><rect x="167.2" y="424" width="1" height="105" fill="#30b0ff"/><rect x="160" y="434" width="16" height="1" fill="#f020f8"/><rect x="160" y="518" width="16" height="1" fill="#f020f8"/><rect x="162" y="436" width="12" height="0.8" fill="#f020f8"/><rect x="162" y="516" width="12" height="0.8" fill="#f020f8"/><rect x="241" y="431" width="1.5" height="91" fill="#f020f8"/><rect x="255.5" y="431" width="1.5" height="91" fill="#f020f8"/><rect x="242" y="431" width="0.7" height="91" fill="#ffffff"/><rect x="255.3" y="431" width="0.7" height="91" fill="#ffffff"/><rect x="245.5" y="431" width="1" height="91" fill="#f020f8"/><rect x="251" y="431" width="1" height="91" fill="#f020f8"/><rect x="248.2" y="424" width="1" height="105" fill="#30b0ff"/><rect x="241" y="434" width="16" height="1" fill="#f020f8"/><rect x="241" y="518" width="16" height="1" fill="#f020f8"/><rect x="243" y="436" width="12" height="0.8" fill="#f020f8"/><rect x="243" y="516" width="12" height="0.8" fill="#f020f8"/><rect x="323" y="431" width="1.5" height="91" fill="#f020f8"/><rect x="337.5" y="431" width="1.5" height="91" fill="#f020f8"/><rect x="324" y="431" width="0.7" height="91" fill="#ffffff"/><rect x="337.3" y="431" width="0.7" height="91" fill="#ffffff"/><rect x="327.5" y="431" width="1" height="91" fill="#f020f8"/><rect x="333" y="431" width="1" height="91" fill="#f020f8"/><rect x="330.2" y="424" width="1" height="105" fill="#30b0ff"/><rect x="323" y="434" width="16" height="1" fill="#f020f8"/><rect x="323" y="518" width="16" height="1" fill="#f020f8"/><rect x="325" y="436" width="12" height="0.8" fill="#f020f8"/><rect x="325" y="516" width="12" height="0.8" fill="#f020f8"/><rect x="404" y="431" width="1.5" height="91" fill="#f020f8"/><rect x="418.5" y="431" width="1.5" height="91" fill="#f020f8"/><rect x="405" y="431" width="0.7" height="91" fill="#ffffff"/><rect x="418.3" y="431" width="0.7" height="91" fill="#ffffff"/><rect x="408.5" y="431" width="1" height="91" fill="#f020f8"/><rect x="414" y="431" width="1" height="91" fill="#f020f8"/><rect x="411.2" y="424" width="1" height="105" fill="#30b0ff"/><rect x="404" y="434" width="16" height="1" fill="#f020f8"/><rect x="404" y="518" width="16" height="1" fill="#f020f8"/><rect x="406" y="436" width="12" height="0.8" fill="#f020f8"/><rect x="406" y="516" width="12" height="0.8" fill="#f020f8"/><rect x="436" y="431" width="1.5" height="91" fill="#f020f8"/><rect x="450.5" y="431" width="1.5" height="91" fill="#f020f8"/><rect x="437" y="431" width="0.7" height="91" fill="#ffffff"/><rect x="450.3" y="431" width="0.7" height="91" fill="#ffffff"/><rect x="440.5" y="431" width="1" height="91" fill="#f020f8"/><rect x="446" y="431" width="1" height="91" fill="#f020f8"/><rect x="443.2" y="424" width="1" height="105" fill="#30b0ff"/><rect x="436" y="434" width="16" height="1" fill="#f020f8"/><rect x="436" y="518" width="16" height="1" fill="#f020f8"/><rect x="438" y="436" width="12" height="0.8" fill="#f020f8"/><rect x="438" y="516" width="12" height="0.8" fill="#f020f8"/><rect x="469" y="431" width="1.5" height="91" fill="#f020f8"/><rect x="483.5" y="431" width="1.5" height="91" fill="#f020f8"/><rect x="470" y="431" width="0.7" height="91" fill="#ffffff"/><rect x="483.3" y="431" width="0.7" height="91" fill="#ffffff"/><rect x="473.5" y="431" width="1" height="91" fill="#f020f8"/><rect x="479" y="431" width="1" height="91" fill="#f020f8"/><rect x="476.2" y="424" width="1" height="105" fill="#30b0ff"/><rect x="469" y="434" width="16" height="1" fill="#f020f8"/><rect x="469" y="518" width="16" height="1" fill="#f020f8"/><rect x="471" y="436" width="12" height="0.8" fill="#f020f8"/><rect x="471" y="516" width="12" height="0.8" fill="#f020f8"/><rect x="502" y="431" width="1.5" height="91" fill="#f020f8"/><rect x="516.5" y="431" width="1.5" height="91" fill="#f020f8"/><rect x="503" y="431" width="0.7" height="91" fill="#ffffff"/><rect x="516.3" y="431" width="0.7" height="91" fill="#ffffff"/><rect x="506.5" y="431" width="1" height="91" fill="#f020f8"/><rect x="512" y="431" width="1" height="91" fill="#f020f8"/><rect x="509.2" y="424" width="1" height="105" fill="#30b0ff"/><rect x="502" y="434" width="16" height="1" fill="#f020f8"/><rect x="502" y="518" width="16" height="1" fill="#f020f8"/><rect x="504" y="436" width="12" height="0.8" fill="#f020f8"/><rect x="504" y="516" width="12" height="0.8" fill="#f020f8"/><rect x="534" y="431" width="1.5" height="91" fill="#f020f8"/><rect x="548.5" y="431" width="1.5" height="91" fill="#f020f8"/><rect x="535" y="431" width="0.7" height="91" fill="#ffffff"/><rect x="548.3" y="431" width="0.7" height="91" fill="#ffffff"/><rect x="538.5" y="431" width="1" height="91" fill="#f020f8"/><rect x="544" y="431" width="1" height="91" fill="#f020f8"/><rect x="541.2" y="424" width="1" height="105" fill="#30b0ff"/><rect x="534" y="434" width="16" height="1" fill="#f020f8"/><rect x="534" y="518" width="16" height="1" fill="#f020f8"/><rect x="536" y="436" width="12" height="0.8" fill="#f020f8"/><rect x="536" y="516" width="12" height="0.8" fill="#f020f8"/><rect x="567" y="431" width="1.5" height="91" fill="#f020f8"/><rect x="581.5" y="431" width="1.5" height="91" fill="#f020f8"/><rect x="568" y="431" width="0.7" height="91" fill="#ffffff"/><rect x="581.3" y="431" width="0.7" height="91" fill="#ffffff"/><rect x="571.5" y="431" width="1" height="91" fill="#f020f8"/><rect x="577" y="431" width="1" height="91" fill="#f020f8"/><rect x="574.2" y="424" width="1" height="105" fill="#30b0ff"/><rect x="567" y="434" width="16" height="1" fill="#f020f8"/><rect x="567" y="518" width="16" height="1" fill="#f020f8"/><rect x="569" y="436" width="12" height="0.8" fill="#f020f8"/><rect x="569" y="516" width="12" height="0.8" fill="#f020f8"/><rect x="600" y="431" width="1.5" height="91" fill="#f020f8"/><rect x="614.5" y="431" width="1.5" height="91" fill="#f020f8"/><rect x="601" y="431" width="0.7" height="91" fill="#ffffff"/><rect x="614.3" y="431" width="0.7" height="91" fill="#ffffff"/><rect x="604.5" y="431" width="1" height="91" fill="#f020f8"/><rect x="610" y="431" width="1" height="91" fill="#f020f8"/><rect x="607.2" y="424" width="1" height="105" fill="#30b0ff"/><rect x="600" y="434" width="16" height="1" fill="#f020f8"/><rect x="600" y="518" width="16" height="1" fill="#f020f8"/><rect x="602" y="436" width="12" height="0.8" fill="#f020f8"/><rect x="602" y="516" width="12" height="0.8" fill="#f020f8"/><rect x="632" y="431" width="1.5" height="91" fill="#f020f8"/><rect x="646.5" y="431" width="1.5" height="91" fill="#f020f8"/><rect x="633" y="431" width="0.7" height="91" fill="#ffffff"/><rect x="646.3" y="431" width="0.7" height="91" fill="#ffffff"/><rect x="636.5" y="431" width="1" height="91" fill="#f020f8"/><rect x="642" y="431" width="1" height="91" fill="#f020f8"/><rect x="639.2" y="424" width="1" height="105" fill="#30b0ff"/><rect x="632" y="434" width="16" height="1" fill="#f020f8"/><rect x="632" y="518" width="16" height="1" fill="#f020f8"/><rect x="634" y="436" width="12" height="0.8" fill="#f020f8"/><rect x="634" y="516" width="12" height="0.8" fill="#f020f8"/><rect x="665" y="431" width="1.5" height="91" fill="#f020f8"/><rect x="679.5" y="431" width="1.5" height="91" fill="#f020f8"/><rect x="666" y="431" width="0.7" height="91" fill="#ffffff"/><rect x="679.3" y="431" width="0.7" height="91" fill="#ffffff"/><rect x="669.5" y="431" width="1" height="91" fill="#f020f8"/><rect x="675" y="431" width="1" height="91" fill="#f020f8"/><rect x="672.2" y="424" width="1" height="105" fill="#30b0ff"/><rect x="665" y="434" width="16" height="1" fill="#f020f8"/><rect x="665" y="518" width="16" height="1" fill="#f020f8"/><rect x="667" y="436" width="12" height="0.8" fill="#f020f8"/><rect x="667" y="516" width="12" height="0.8" fill="#f020f8"/><rect x="697" y="431" width="1.5" height="91" fill="#f020f8"/><rect x="711.5" y="431" width="1.5" height="91" fill="#f020f8"/><rect x="698" y="431" width="0.7" height="91" fill="#ffffff"/><rect x="711.3" y="431" width="0.7" height="91" fill="#ffffff"/><rect x="701.5" y="431" width="1" height="91" fill="#f020f8"/><rect x="707" y="431" width="1" height="91" fill="#f020f8"/><rect x="704.2" y="424" width="1" height="105" fill="#30b0ff"/><rect x="697" y="434" width="16" height="1" fill="#f020f8"/><rect x="697" y="518" width="16" height="1" fill="#f020f8"/><rect x="699" y="436" width="12" height="0.8" fill="#f020f8"/><rect x="699" y="516" width="12" height="0.8" fill="#f020f8"/><use href="#pb" x="85.8" y="427.5"/><use href="#pb" x="85.8" y="525.5"/><use href="#pb" x="167.8" y="427.5"/><use href="#pb" x="167.8" y="525.5"/><use href="#pb" x="248.9" y="427.5"/><use href="#pb" x="248.9" y="525.5"/><use href="#pb" x="330.6" y="427.5"/><use href="#pb" x="330.6" y="525.5"/><use href="#pb" x="411.7" y="427.5"/><use href="#pb" x="411.7" y="525.5"/><use href="#pb" x="444.3" y="427.5"/><use href="#pb" x="444.3" y="525.5"/><use href="#pb" x="476.9" y="427.5"/><use href="#pb" x="476.9" y="525.5"/><use href="#pb" x="509.5" y="427.5"/><use href="#pb" x="509.5" y="525.5"/><use href="#pb" x="542.1" y="427.5"/><use href="#pb" x="542.1" y="525.5"/><use href="#pb" x="574.7" y="427.5"/><use href="#pb" x="574.7" y="525.5"/><use href="#pb" x="607.3" y="427.5"/><use href="#pb" x="607.3" y="525.5"/><use href="#pb" x="639.9" y="427.5"/><use href="#pb" x="639.9" y="525.5"/><use href="#pb" x="672.5" y="427.5"/><use href="#pb" x="672.5" y="525.5"/><use href="#pb" x="705.1" y="427.5"/><use href="#pb" x="705.1" y="525.5"/>
<use href="#pf" x="72.5" y="427.3"/><use href="#pf" x="72.5" y="525.3"/><use href="#pf" x="227.5" y="427.3"/><use href="#pf" x="227.5" y="525.3"/><use href="#pf" x="390.5" y="427.3"/><use href="#pf" x="390.5" y="525.3"/><use href="#pf" x="553.5" y="427.3"/><use href="#pf" x="553.5" y="525.3"/><use href="#pf" x="708.5" y="427.3"/><use href="#pf" x="708.5" y="525.3"/>
<rect x="717" y="423" width="40" height="1" fill="#38dc48"/><rect x="717" y="432" width="26" height="1" fill="#38dc48"/><rect x="717" y="520" width="26" height="1" fill="#38dc48"/><rect x="717" y="529" width="40" height="1" fill="#38dc48"/><rect x="753" y="423" width="1" height="107" fill="#38dc48"/><path d="M753.5 424l-1.2 4h2.4z" fill="#38dc48"/><path d="M753.5 529l-1.2 -4h2.4z" fill="#38dc48"/><rect x="740" y="432" width="1" height="89" fill="#38dc48"/><path d="M740.5 433l-1.2 4h2.4z" fill="#38dc48"/><path d="M740.5 520l-1.2 -4h2.4z" fill="#38dc48"/><rect x="726" y="425" width="1" height="28" fill="#38dc48"/><rect x="726" y="503" width="1" height="27" fill="#38dc48"/><path d="M726.5 432l-1.2 -4h2.4z" fill="#38dc48"/><path d="M726.5 521l-1.2 4h2.4z" fill="#38dc48"/><text x="737.7" y="482" textLength="11.5" lengthAdjust="spacingAndGlyphs" font-size="9.3" font-family="'Liberation Sans',sans-serif" font-weight="bold" fill="#fafa30" transform="rotate(-90 737.7 482)">540</text><text x="751.2" y="482.5" textLength="12" lengthAdjust="spacingAndGlyphs" font-size="9.3" font-family="'Liberation Sans',sans-serif" font-weight="bold" fill="#fafa30" transform="rotate(-90 751.2 482.5)">648</text><text x="723.7" y="450.5" textLength="4" lengthAdjust="spacingAndGlyphs" font-size="8" font-family="'Liberation Sans',sans-serif" font-weight="bold" fill="#fafa30" transform="rotate(-90 723.7 450.5)">6</text><text x="723.7" y="510" textLength="4" lengthAdjust="spacingAndGlyphs" font-size="8" font-family="'Liberation Sans',sans-serif" font-weight="bold" fill="#fafa30" transform="rotate(-90 723.7 510)">6</text>
<rect x="771" y="504" width="185" height="1" fill="#ffffff"/><rect x="771" y="504" width="1" height="82" fill="#ffffff"/><rect x="449" y="585" width="507" height="1" fill="#ffffff"/><rect x="449" y="585" width="1" height="47" fill="#ffffff"/><rect x="771" y="520" width="185" height="1" fill="#38dc48"/><rect x="771" y="536" width="185" height="1" fill="#38dc48"/><rect x="771" y="553" width="185" height="1" fill="#38dc48"/><rect x="771" y="569" width="185" height="1" fill="#38dc48"/><rect x="806" y="504" width="1" height="82" fill="#38dc48"/><rect x="861" y="504" width="1" height="82" fill="#38dc48"/><rect x="922" y="504" width="1" height="82" fill="#38dc48"/><rect x="771" y="586" width="1" height="46" fill="#38dc48"/><rect x="449" y="598" width="323" height="1" fill="#38dc48"/><rect x="449" y="610" width="185" height="1" fill="#38dc48"/><rect x="633" y="598" width="1" height="34" fill="#38dc48"/><rect x="699" y="585" width="1" height="14" fill="#38dc48"/><rect x="633" y="616" width="323" height="1" fill="#38dc48"/><rect x="634" y="625" width="346" height="1" fill="#ffffff"/><text x="788" y="517.7" text-anchor="middle" textLength="17.5" lengthAdjust="spacingAndGlyphs" font-size="15" font-family="'Liberation Sans',sans-serif" font-weight="normal" fill="#fafa30">102</text><text x="832" y="518" text-anchor="middle" textLength="21" lengthAdjust="spacingAndGlyphs" font-size="11.5" font-family="'Liberation Sans','Noto Sans CJK SC',sans-serif" font-weight="bold" fill="#fafa30">调整脚</text><text x="893.7" y="517.7" text-anchor="middle" textLength="46" lengthAdjust="spacingAndGlyphs" font-size="15" font-family="'Liberation Sans',sans-serif" font-weight="normal" fill="#fafa30">M20-100</text><text x="938" y="517.7" text-anchor="middle" textLength="10" lengthAdjust="spacingAndGlyphs" font-size="15" font-family="'Liberation Sans',sans-serif" font-weight="normal" fill="#fafa30">10</text><text x="788" y="534" text-anchor="middle" textLength="17.5" lengthAdjust="spacingAndGlyphs" font-size="15" font-family="'Liberation Sans',sans-serif" font-weight="normal" fill="#fafa30">101</text><text x="832" y="534.3" text-anchor="middle" textLength="28" lengthAdjust="spacingAndGlyphs" font-size="11.5" font-family="'Liberation Sans','Noto Sans CJK SC',sans-serif" font-weight="bold" fill="#fafa30">带座轴承</text><text x="891.8" y="534" text-anchor="middle" textLength="42.5" lengthAdjust="spacingAndGlyphs" font-size="15" font-family="'Liberation Sans',sans-serif" font-weight="normal" fill="#fafa30">UCP205</text><text x="938" y="534" text-anchor="middle" textLength="10" lengthAdjust="spacingAndGlyphs" font-size="15" font-family="'Liberation Sans',sans-serif" font-weight="normal" fill="#fafa30">28</text><text x="788" y="550.3" text-anchor="middle" textLength="17.5" lengthAdjust="spacingAndGlyphs" font-size="15" font-family="'Liberation Sans',sans-serif" font-weight="normal" fill="#fafa30">002</text><text x="832" y="550.6" text-anchor="middle" textLength="14" lengthAdjust="spacingAndGlyphs" font-size="11.5" font-family="'Liberation Sans','Noto Sans CJK SC',sans-serif" font-weight="bold" fill="#fafa30">滚筒</text><text x="891" y="550.6" text-anchor="middle" textLength="13" lengthAdjust="spacingAndGlyphs" font-size="11.5" font-family="'Liberation Sans','Noto Sans CJK SC',sans-serif" font-weight="bold" fill="#fafa30">自制</text><text x="938" y="550.3" text-anchor="middle" textLength="10" lengthAdjust="spacingAndGlyphs" font-size="15" font-family="'Liberation Sans',sans-serif" font-weight="normal" fill="#fafa30">14</text><text x="788" y="566.6" text-anchor="middle" textLength="17.5" lengthAdjust="spacingAndGlyphs" font-size="15" font-family="'Liberation Sans',sans-serif" font-weight="normal" fill="#fafa30">001</text><text x="832" y="566.9" text-anchor="middle" textLength="14" lengthAdjust="spacingAndGlyphs" font-size="11.5" font-family="'Liberation Sans','Noto Sans CJK SC',sans-serif" font-weight="bold" fill="#fafa30">机架</text><text x="938" y="566.6" text-anchor="middle" textLength="4" lengthAdjust="spacingAndGlyphs" font-size="15" font-family="'Liberation Sans',sans-serif" font-weight="normal" fill="#fafa30">1</text><text x="788" y="582" text-anchor="middle" textLength="15" lengthAdjust="spacingAndGlyphs" font-size="10.5" font-family="'Liberation Sans','Noto Sans CJK SC',sans-serif" font-weight="bold" fill="#fafa30">图号</text><text x="832" y="582" text-anchor="middle" textLength="13.5" lengthAdjust="spacingAndGlyphs" font-size="10.5" font-family="'Liberation Sans','Noto Sans CJK SC',sans-serif" font-weight="bold" fill="#fafa30">品名</text><text x="891" y="582" text-anchor="middle" textLength="13.5" lengthAdjust="spacingAndGlyphs" font-size="10.5" font-family="'Liberation Sans','Noto Sans CJK SC',sans-serif" font-weight="bold" fill="#fafa30">材料</text><text x="938" y="582" text-anchor="middle" textLength="13.5" lengthAdjust="spacingAndGlyphs" font-size="10.5" font-family="'Liberation Sans','Noto Sans CJK SC',sans-serif" font-weight="bold" fill="#fafa30">数量</text>
<text x="456.5" y="595.2" textLength="26" lengthAdjust="spacingAndGlyphs" font-size="9" font-family="'Liberation Sans',sans-serif" font-weight="bold" fill="#38dc48">USED ON</text><text x="537" y="594.9" textLength="12" lengthAdjust="spacingAndGlyphs" font-size="10.5" font-family="'Liberation Sans',sans-serif" font-weight="normal" fill="#38dc48">RC</text><text x="705.5" y="595.2" textLength="15" lengthAdjust="spacingAndGlyphs" font-size="9" font-family="'Liberation Sans',sans-serif" font-weight="bold" fill="#38dc48">QTY.</text><text x="735.5" y="594.9" textLength="3" lengthAdjust="spacingAndGlyphs" font-size="10.5" font-family="'Liberation Sans',sans-serif" font-weight="normal" fill="#38dc48">1</text><text x="456" y="608.4" textLength="20" lengthAdjust="spacingAndGlyphs" font-size="9.5" font-family="'Liberation Sans',sans-serif" font-weight="normal" fill="#38dc48">SCALE</text><text x="540.5" y="607.4" textLength="16.5" lengthAdjust="spacingAndGlyphs" font-size="10.5" font-family="'Liberation Sans',sans-serif" font-weight="normal" fill="#38dc48">1:12</text><text x="635" y="611.4" textLength="19" lengthAdjust="spacingAndGlyphs" font-size="9" font-family="'Liberation Sans',sans-serif" font-weight="bold" fill="#38dc48">MATL.</text><text x="454" y="622.6" textLength="74" lengthAdjust="spacingAndGlyphs" font-size="9" font-family="'Liberation Sans',sans-serif" font-weight="bold" fill="#38dc48">TOLERANCES UNLESS</text><text x="454" y="633.4" textLength="74" lengthAdjust="spacingAndGlyphs" font-size="9" font-family="'Liberation Sans',sans-serif" font-weight="bold" fill="#38dc48">OTHERWISE SPECIFIED</text><text x="635" y="629.9" textLength="31" lengthAdjust="spacingAndGlyphs" font-size="9" font-family="'Liberation Sans',sans-serif" font-weight="bold" fill="#38dc48">HARDNESS</text><text x="774.5" y="626.2" textLength="34.5" lengthAdjust="spacingAndGlyphs" font-size="9" font-family="'Liberation Sans',sans-serif" font-weight="bold" fill="#38dc48">PART NAME</text>
<g fill="none" stroke="#fff" stroke-width="1"><rect x="39.5" y="607.5" width="11" height="10"/><path d="M50.5 612.5H99M99 607.5v10l14-5zM99 610.5l10 2M99 614.5l10-2"/><path d="M44.5 607.5V558M39.5 558h10l-5-13.5zM42.5 558l2-10M46.5 558l-2-10"/><path d="M123.5 606.5l10 13M133.5 606.5l-10 13"/><path d="M42.5 522l4.5 6.5l4.5-6.5M47 528.5v7.5"/></g><g fill="none" stroke="#fff"><rect x="960.5" y="613.5" width="19" height="17"/></g>
</g></svg>

<div class="abs" style="left:0;top:66px;width:25px;height:574px;background:#d4d0c8;border-top:1px solid #fff;border-right:1px solid #808080"></div>
<div class="abs" style="left:0;top:67px;width:25px;height:188px;border:1px solid;border-color:#fff #808080 #808080 #fff"></div>
<div class="abs" style="left:0;top:256px;width:25px;height:126px;border:1px solid;border-color:#fff #808080 #808080 #fff"></div>
<div class="abs" style="left:0;top:383px;width:25px;height:83px;border:1px solid;border-color:#fff #808080 #808080 #fff"></div>
<div class="abs" style="left:0;top:467px;width:25px;height:172px;border:1px solid;border-color:#fff #808080 #808080 #fff"></div>
<svg class="abs" style="left:4px;top:79px" width="18" height="17" viewBox="0 0 18 17"><path d="M2 8l7-6" stroke="#606870" stroke-width="1.200"/><path d="M5 9l9-7" stroke="#000" stroke-width="1.500"/><polygon points="16,0 10.500,2 14,5.500" fill="#000"/><rect x="3.500" y="8.500" width="10" height="5.500" fill="#e0ecf8" stroke="#506080" stroke-width="1.200"/><circle cx="3.500" cy="14" r="1" fill="#405080"/><polygon points="17,12 17,17 12,17" fill="#000"/></svg>
<svg class="abs" style="left:4px;top:101px" width="18" height="17" viewBox="0 0 18 17"><path d="M2 15l12-11v11z" fill="#dce8f4" stroke="#8090a0" stroke-width=".8"/><path d="M2 15L14 3" stroke="#000" stroke-width="1.600"/><polygon points="16.500,.5 10.500,2.500 14.500,6.500" fill="#000"/><path d="M1 15.500h12" stroke="#303840" stroke-width="1.200"/><path d="M14.500 7v6" stroke="#405070" stroke-width="1.200"/><polygon points="17,12 17,17 12,17" fill="#000"/></svg>
<div class="abs" style="left:3px;top:124px;width:19px;height:2px;border-top:1px solid #808080;border-bottom:1px solid #fff"></div>
<svg class="abs" style="left:4px;top:129px" width="18" height="17" viewBox="0 0 18 17"><polygon points="0,0 7,0 0,6" fill="#0020d0"/><path d="M4 5l6-3l6 4v9h-12z" fill="#e4ecf6" stroke="#7088a8" stroke-width="1"/><g fill="#e8e800" stroke="#909000" stroke-width=".6"><rect x="4" y="5" width="3.500" height="3.500"/><rect x="4" y="8.500" width="3.500" height="3.500"/><rect x="7.500" y="8.500" width="3.500" height="3.500"/><rect x="7.500" y="12" width="3.500" height="3.500"/></g><circle cx="13" cy="11.500" r="2.800" fill="#fffcc0"/></svg>
<div class="abs" style="left:3px;top:151px;width:19px;height:2px;border-top:1px solid #808080;border-bottom:1px solid #fff"></div>
<svg class="abs" style="left:4px;top:157px" width="18" height="17" viewBox="0 0 18 17"><g fill="#e8e800" stroke="#909000" stroke-width=".6"><rect x="1" y="1" width="3.500" height="3.500"/><rect x="1" y="4.500" width="3.500" height="3.500"/><rect x="4.500" y="4.500" width="3.500" height="3.500"/></g><rect x="7.500" y="3" width="8" height="6" fill="#f4f8ff" stroke="#6888b8" stroke-width="1"/><rect x="1.500" y="9" width="5" height="6" fill="#f4f4f8" stroke="#8890b0" stroke-width=".8"/><rect x="6.500" y="8" width="8" height="7.500" fill="#f8e8c8" stroke="#a08860" stroke-width=".8"/><polygon points="17,12 17,17 12,17" fill="#000"/></svg>
<svg class="abs" style="left:4px;top:179px" width="18" height="18" viewBox="0 0 18 18"><path d="M5 11l2-4l8-7l2 2.500l-8 7z" fill="#e8c020" stroke="#a08010" stroke-width=".6"/><path d="M5 11l2-4l2 2.500z" fill="#303030"/><path d="M2 2v14M2 4h4M2 8h3" stroke="#8088a8" stroke-width=".8" stroke-dasharray="1.500 1"/><g fill="#e0e000" stroke="#909000" stroke-width=".5"><rect x="3" y="11" width="3.500" height="3.500"/><rect x="6.500" y="11" width="3.500" height="3.500"/><rect x="3" y="14.500" width="3.500" height="3"/></g><rect x="10" y="12" width="4" height="4" fill="#b8c8e8" stroke="#6878a8" stroke-width=".6"/><polygon points="17,13 17,18 12,18" fill="#000"/></svg>
<div class="abs" style="left:3px;top:202px;width:19px;height:2px;border-top:1px solid #808080;border-bottom:1px solid #fff"></div>
<svg class="abs" style="left:4px;top:207px" width="18" height="17" viewBox="0 0 18 17"><path d="M8 2h7v10h-7z" fill="#c0c4c8" stroke="#505860" stroke-width="1"/><path d="M8 2l3-1.500h6v9.500l-2 2" fill="#e8e8ec" stroke="#505860" stroke-width=".8"/><path d="M2 13l6-10M3 15l10-4M2 13l10-8" stroke="#e03030" stroke-width=".8"/><rect x="1" y="12" width="7" height="4.500" fill="#8898a8" stroke="#404850" stroke-width=".8"/><path d="M1 16.500h8" stroke="#203040" stroke-width="1.500"/></svg>
<svg class="abs" style="left:4px;top:230px" width="18" height="17" viewBox="0 0 18 17"><rect x="4" y="1" width="12" height="12" fill="#e8ecf4" stroke="#9098a8" stroke-width="1"/><rect x="1.500" y="3.500" width="11" height="11.500" fill="#eef0f8" stroke="#202830" stroke-width="1.400"/><path d="M12.500 15l3.500-2" stroke="#606870"/><polygon points="17,12 17,17 12,17" fill="#000"/></svg>
<svg class="abs" style="left:4px;top:271px" width="18" height="16" viewBox="0 0 18 16"><rect x="3.500" y="1.500" width="9" height="6" fill="#d8e890" stroke="#2858a8" stroke-width="1.400"/><circle cx="10.500" cy="10" r="3.800" fill="#d8e8b0" stroke="#486858" stroke-width="1.200"/><rect x="1" y="6.500" width="3" height="3" fill="#2858a8"/><polygon points="17,10 17,15 12,15" fill="#000"/></svg>
<svg class="abs" style="left:4px;top:291px" width="18" height="18" viewBox="0 0 18 18"><path d="M7 1h6l3 3v9h-9z" fill="#dce8f4" stroke="#90a8c8" stroke-width="1"/><rect x="2.500" y="5.500" width="9" height="6" fill="#d0e080" stroke="#2858a8" stroke-width="1.400"/><circle cx="10" cy="13" r="3.800" fill="#c8dca8" stroke="#486858" stroke-width="1.200"/><rect x="0" y="10" width="3" height="3" fill="#2858a8"/><polygon points="17,13 17,18 12,18" fill="#000"/></svg>
<svg class="abs" style="left:4px;top:315px" width="18" height="16" viewBox="0 0 18 16"><defs><linearGradient id="gw" x1="0" y1="0" x2="1" y2="1"><stop offset="0" stop-color="#ffffff"/><stop offset="1" stop-color="#a8c4e4"/></linearGradient></defs><rect x="1.500" y="1.500" width="14" height="11.500" fill="url(#gw)" stroke="#7090b8" stroke-width="1"/><rect x="7.500" y="9.500" width="8" height="4.500" fill="#f0f4fa" stroke="#405880" stroke-width="1"/><polygon points="17,11 17,16 12,16" fill="#000"/></svg>
<div class="abs" style="left:5px;top:333px;font-family:'Liberation Sans',sans-serif;font-size:19px;line-height:20px;color:#000">A</div><svg class="abs" style="left:4px;top:337px" width="18" height="14" viewBox="0 0 18 14"><polygon points="17,9 17,14 12,14" fill="#000"/></svg>
<svg class="abs" style="left:4px;top:358px" width="18" height="17" viewBox="0 0 18 17"><rect x="1.500" y="1.500" width="14" height="14" fill="#eef2f8" stroke="#606870" stroke-width="1"/><path d="M1.500 15.500l14-14" stroke="#000" stroke-width="1.600"/><path d="M4 3v6M7 3v4" stroke="#5070a0" stroke-width="1.200"/><polygon points="17,12 17,17 12,17" fill="#000"/></svg>
<svg class="abs" style="left:4px;top:398px" width="18" height="15" viewBox="0 0 18 15"><path d="M1 8l2.500-1.500l3 6l4-11h6.500" fill="none" stroke="#2c5088" stroke-width="1.800"/><polygon points="17,10 17,15 12,15" fill="#000"/></svg>
<svg class="abs" style="left:4px;top:420px" width="18" height="16" viewBox="0 0 18 16"><path d="M3 13c0-6 2-8 7-8" fill="none" stroke="#284878" stroke-width="1.500"/><polygon points="1,10 5.500,11 2.500,15.500" fill="#284878"/><text x="10" y="8" font-size="9" font-weight="bold" font-family="'Liberation Sans',sans-serif" fill="#1c3c78">A</text><polygon points="17,11 17,16 12,16" fill="#000"/></svg>
<svg class="abs" style="left:4px;top:442px" width="18" height="17" viewBox="0 0 18 17"><path d="M2 5l6-4l8 3l-3 10l-7 2z" fill="#d8e4f4" stroke="#4870b0" stroke-width="1"/><path d="M2 5l3 11" stroke="#c02020" stroke-width="2.500"/><path d="M7 5l6 2M7.500 8l5 1.500M8 11l4 1" stroke="#3058a0" stroke-width="1.200"/><path d="M13 4l3 0l-3 10" fill="#2c58a0"/><polygon points="17,12 17,17 12,17" fill="#000"/></svg>
<svg class="abs" style="left:4px;top:482px" width="18" height="16" viewBox="0 0 18 16"><defs><linearGradient id="gc" x1="0" y1="0" x2="0" y2="1"><stop offset="0" stop-color="#3c70b8"/><stop offset=".45" stop-color="#e8f0fa"/><stop offset="1" stop-color="#2c5898"/></linearGradient></defs><rect x="1" y="2" width="6.500" height="11" rx="2" fill="url(#gc)" stroke="#284878" stroke-width=".6"/><rect x="9.500" y="2" width="6.500" height="11" rx="2" fill="url(#gc)" stroke="#284878" stroke-width=".6"/><path d="M8.500 0v15" stroke="#506080" stroke-width=".8" stroke-dasharray="2 1"/><polygon points="17,11 17,16 12,16" fill="#000"/></svg>
<svg class="abs" style="left:4px;top:505px" width="18" height="16" viewBox="0 0 18 16"><rect x="1.500" y="1.500" width="14" height="11" fill="#fff" stroke="#000" stroke-width="1.400"/><path d="M6 1.500v11M11 1.500v11" stroke="#000" stroke-width="1.400"/><path d="M8.500 0v15" stroke="#808080" stroke-width=".6"/><polygon points="17,11 17,16 12,16" fill="#000"/></svg>
<svg class="abs" style="left:4px;top:527px" width="18" height="16" viewBox="0 0 18 16"><rect x="1" y="1" width="5" height="13" fill="url(#gc)" stroke="#284878" stroke-width=".6"/><rect x="6" y="4" width="10" height="7" fill="url(#gc)" stroke="#284878" stroke-width=".6"/><polygon points="17,11 17,16 12,16" fill="#000"/></svg>
<svg class="abs" style="left:4px;top:548px" width="18" height="16" viewBox="0 0 18 16"><rect x="1" y="1" width="5" height="12" fill="#3868b0" stroke="#203c70" stroke-width=".6"/><rect x="6" y="4" width="10" height="5" fill="#88a8d8" stroke="#284878" stroke-width=".6"/><path d="M4 12.500h12" stroke="#d02020" stroke-width="1.400"/><path d="M9 9v3M7.500 10.500l1.500 2l1.500-2" stroke="#d02020" stroke-width="1.200" fill="none"/><path d="M3 15h12" stroke="#d02020" stroke-width=".8" stroke-dasharray="3 1.500"/></svg>
<svg class="abs" style="left:4px;top:570px" width="18" height="16" viewBox="0 0 18 16"><defs><linearGradient id="gg" x1="0" y1="0" x2="1" y2="1"><stop offset="0" stop-color="#24508c"/><stop offset=".5" stop-color="#a8c4e8"/><stop offset="1" stop-color="#f0f6ff"/></linearGradient></defs><rect x="1" y="1" width="14.500" height="14" fill="url(#gg)" stroke="#284878" stroke-width="1"/><path d="M1 6h14M1 10.500h14M6 1v14M11 1v14" stroke="#e8f0fa" stroke-width=".7"/><polygon points="17,11 17,16 12,16" fill="#000"/></svg>
<svg class="abs" style="left:4px;top:592px" width="18" height="16" viewBox="0 0 18 16"><path d="M2 1l3.500 13l3-13l3.500 13l3-13" fill="none" stroke="#1c3c68" stroke-width="2.400"/><path d="M2.500 1l3 12M9 2l3 11" stroke="#a8c4e8" stroke-width=".8"/><polygon points="17,11 17,16 12,16" fill="#000"/></svg>
<svg class="abs" style="left:4px;top:613px" width="18" height="17" viewBox="0 0 18 17"><path d="M2 4l4-3h9l1.500 3v6l-3 5h-8l-3.500-3z" fill="#2048c8"/><path d="M9 3h6l1.500 2v6l-3 4h-3c-2-3-2-6-1.500-9z" fill="#ff20f0"/><path d="M2 4l4-3l3 3l-2 4l-5 1z" fill="#20c8e8"/><path d="M1 5l3 1l-1 4z" fill="#e02020"/><path d="M2 10l4-1l2 6h-3z" fill="#28a8d8"/><path d="M1 8l2 3" stroke="#ffe000" stroke-width="1.500"/><polygon points="17,12 17,17 12,17" fill="#000"/></svg>

<div class="abs dither" style="left:980px;top:67px;width:16px;height:564px"></div><div class="abs" style="left:996px;top:66px;width:2px;height:582px;background:#f4f2ee"></div>
<div class="abs raised" style="left:980px;top:67px;width:16px;height:16px"></div><svg class="abs" style="left:979.5px;top:67px" width="16" height="16"><polygon points="4.5,9.5 8,6 11.5,9.5" fill="#000"/></svg>
<div class="abs raised" style="left:980px;top:615px;width:16px;height:16px"></div><svg class="abs" style="left:979.5px;top:615px" width="16" height="16"><polygon points="4.5,6.5 8,10 11.5,6.5" fill="#000"/></svg>
<div class="abs raised" style="left:980px;top:261px;width:16px;height:16px"></div>
<div class="abs" style="left:997px;top:66px;width:27px;height:582px;background:#d4d0c8"></div>
<div class="abs" style="left:999px;top:67px;width:25px;height:286px;border:1px solid;border-color:#fff #808080 #808080 #fff;border-right:none"></div>
<div class="abs" style="left:999px;top:355px;width:25px;height:83px;border:1px solid;border-color:#fff #808080 #808080 #fff;border-right:none"></div>
<svg class="abs" style="left:1003px;top:80px" width="18" height="16" viewBox="0 0 18 16"><path d="M1 8h16" stroke="#a87020" stroke-width="1"/><circle cx="9" cy="8" r="1.800" fill="#ffd820" stroke="#c09010" stroke-width=".5"/></svg>
<svg class="abs" style="left:1003px;top:101px" width="18" height="17" viewBox="0 0 18 17"><path d="M9 1v15" stroke="#a87020" stroke-width="1"/><path d="M9 5v6" stroke="#f0c020" stroke-width="2.200"/><circle cx="9" cy="9.5" r="1.800" fill="#ffd820" stroke="#c09010" stroke-width=".5"/></svg>
<svg class="abs" style="left:1003px;top:124px" width="18" height="17" viewBox="0 0 18 17"><path d="M1 8.500h16M9 1v15" stroke="#a87020" stroke-width="1"/><circle cx="9" cy="8.5" r="1.800" fill="#ffd820" stroke="#c09010" stroke-width=".5"/></svg>
<svg class="abs" style="left:1003px;top:146px" width="18" height="17" viewBox="0 0 18 17"><path d="M3 2.500c6-1 10 3 11 10" fill="none" stroke="#202830" stroke-width="1.100"/><polygon points="14,14.500 12,10.500 16,10.500" fill="#202830"/><circle cx="2.500" cy="2.500" r="1.200" fill="#202830"/><path d="M1 16L15 1" stroke="#c03020" stroke-width="1.100"/><path d="M3 15.500l7-7.500" stroke="#e8b820" stroke-width="1.600"/><circle cx="6" cy="11.5" r="1.800" fill="#ffd820" stroke="#c09010" stroke-width=".5"/></svg>
<svg class="abs" style="left:1003px;top:168px" width="18" height="17" viewBox="0 0 18 17"><path d="M3 2.500c6-1 10 3 11 10" fill="none" stroke="#202830" stroke-width="1.100"/><polygon points="14,14.500 12,10.500 16,10.500" fill="#202830"/><circle cx="2.500" cy="2.500" r="1.200" fill="#202830"/><path d="M1 16L15 1" stroke="#c03020" stroke-width="1.100"/><path d="M3 15.500l7-7.500" stroke="#e8b820" stroke-width="1.600"/><path d="M7 11h6" stroke="#e8b820" stroke-width="2"/></svg>
<svg class="abs" style="left:1003px;top:189px" width="18" height="17" viewBox="0 0 18 17"><path d="M1 12L12 1M4 16L16 4" stroke="#c03020" stroke-width="1.100"/><path d="M2 14.500L13 3.500" stroke="#e8b820" stroke-width="1.600"/><path d="M9 7l3 3" stroke="#f0e040" stroke-width="3"/></svg>
<svg class="abs" style="left:1003px;top:211px" width="18" height="17" viewBox="0 0 18 17"><path d="M1 13L13 1M4 16.500L16 4.500" stroke="#c03020" stroke-width="1.100"/><path d="M2.500 15L14 3.500" stroke="#e8b820" stroke-width="1.600"/><circle cx="9" cy="5" r="1.800" fill="#ffd820" stroke="#c09010" stroke-width=".5"/></svg>
<svg class="abs" style="left:1003px;top:234px" width="18" height="17" viewBox="0 0 18 17"><path d="M2 1l14 14" stroke="#c03020" stroke-width="1.100"/><path d="M2 16l8-8" stroke="#e8b820" stroke-width="1.600"/><path d="M1.500 16.500l3-3.500" stroke="#a0a020" stroke-width="2"/></svg>
<svg class="abs" style="left:1003px;top:255px" width="18" height="17" viewBox="0 0 18 17"><circle cx="8.500" cy="8.500" r="6.800" fill="none" stroke="#c82828" stroke-width="1.300"/><circle cx="8.5" cy="8.5" r="1.800" fill="#ffd820" stroke="#c09010" stroke-width=".5"/><circle cx="13.500" cy="4" r="1" fill="#e8b820"/></svg>
<div class="abs" style="left:1002px;top:276px;width:19px;height:2px;border-top:1px solid #808080;border-bottom:1px solid #fff"></div>
<svg class="abs" style="left:1003px;top:284px" width="18" height="16" viewBox="0 0 18 16"><path d="M2 1l7 8l7-5" fill="none" stroke="#282820" stroke-width="1.300"/><path d="M9 9l-4 5" stroke="#e8c820" stroke-width="2"/><path d="M2 1l5 6" stroke="#e8b820" stroke-width="1.600"/></svg>
<svg class="abs" style="left:1003px;top:305px" width="18" height="17" viewBox="0 0 18 17"><path d="M3 1v8l13 5M3 9l-2 7" fill="none" stroke="#282820" stroke-width="1.300"/><path d="M1 16L15 2" stroke="#c03020" stroke-width="1.100"/><path d="M3 2v6" stroke="#e8b820" stroke-width="1.600"/><path d="M10 12l5 2" stroke="#e8b820" stroke-width="1.600"/></svg>
<svg class="abs" style="left:1003px;top:328px" width="18" height="17" viewBox="0 0 18 17"><path d="M2 2l14 12M1 14L15 4M11 1l-3 15" stroke="#e02828" stroke-width="1.300"/></svg>
<svg class="abs" style="left:1003px;top:368px" width="18" height="16" viewBox="0 0 18 16"><rect x="2" y="2" width="12.500" height="12" fill="none" stroke="#30d030" stroke-width="1.600"/></svg>
<svg class="abs" style="left:1003px;top:390px" width="18" height="15" viewBox="0 0 18 15"><rect x="2" y="2" width="12.500" height="9" fill="none" stroke="#30d030" stroke-width="1.600"/><path d="M7 9h7" stroke="#30d030" stroke-width="1.500"/><path d="M2 13h12" stroke="#70b870" stroke-width="1"/></svg>
<svg class="abs" style="left:1003px;top:413px" width="18" height="13" viewBox="0 0 18 13"><path d="M3 2.500h11" stroke="#3050a0" stroke-width="1.500"/><path d="M3 6.500h11M3 10h11" stroke="#40c040" stroke-width="1.500"/></svg>

<div class="abs" style="left:27px;top:631px;width:953px;height:16px;background:#d4d0c8"></div>
<div class="abs dither" style="left:678px;top:631px;width:286px;height:15px"></div>
<div class="abs raised" style="left:655px;top:631px;width:6px;height:15px"></div>
<div class="abs raised" style="left:661px;top:631px;width:17px;height:15px"></div><svg class="abs" style="left:661px;top:631px" width="16" height="16"><polygon points="9.5,4.500 6,8 9.5,11.500" fill="#000"/></svg>
<div class="abs raised" style="left:963px;top:631px;width:17px;height:15px"></div><svg class="abs" style="left:963px;top:631px" width="16" height="16"><polygon points="6.5,4.500 10,8 6.5,11.500" fill="#000"/></svg>
<div class="abs raised" style="left:948px;top:631px;width:15px;height:15px"></div>
<div class="abs" style="left:28px;top:631px;width:18px;height:15px;border:1px solid;border-color:#fff #808080 #808080 #fff;background:#d4d0c8"></div><svg class="abs" style="left:28px;top:631px" width="18" height="15"><path d="M5 3v9M12 3l-5 4.5l5 4.5z" fill="#000" stroke="#000" stroke-width="0.8"/></svg>
<div class="abs" style="left:46px;top:631px;width:18px;height:15px;border:1px solid;border-color:#fff #808080 #808080 #fff;background:#d4d0c8"></div><svg class="abs" style="left:46px;top:631px" width="18" height="15"><path d="M11 3l-5 4.5l5 4.5z" fill="#000" stroke="#000" stroke-width="0.8"/></svg>
<div class="abs" style="left:64px;top:631px;width:18px;height:15px;border:1px solid;border-color:#fff #808080 #808080 #fff;background:#d4d0c8"></div><svg class="abs" style="left:64px;top:631px" width="18" height="15"><path d="M6 3l5 4.5l-5 4.5z" fill="#000" stroke="#000" stroke-width="0.8"/></svg>
<div class="abs" style="left:82px;top:631px;width:18px;height:15px;border:1px solid;border-color:#fff #808080 #808080 #fff;background:#d4d0c8"></div><svg class="abs" style="left:82px;top:631px" width="18" height="15"><path d="M12 3v9M5 3l5 4.5l-5 4.5z" fill="#000" stroke="#000" stroke-width="0.8"/></svg>
<svg class="abs" style="left:100px;top:631px" width="135" height="16" viewBox="0 0 135 16"><polygon points="3.5,0 42.2,0 38,14.8 8,14.8" fill="#000"/><path d="M41.8 0 L44.5 14.3 H80.5 L83.2 0 L86 14.3 H122.8 L127 0" fill="none" stroke="#000" stroke-width="1.4"/><text x="10.5" y="11" font-size="12" fill="#fff" font-family="'Liberation Sans','WenQuanYi Zen Hei',sans-serif">模型</text><text x="46.3" y="11" font-size="12" fill="#000" font-family="'Liberation Sans','WenQuanYi Zen Hei',sans-serif">布局1</text><text x="88.7" y="11" font-size="12" fill="#000" font-family="'Liberation Sans','WenQuanYi Zen Hei',sans-serif">布局2</text></svg>
<div class="abs" style="left:0;top:648px;width:1024px;height:2px;background:#fff"></div><div class="abs" style="left:0;top:650px;width:1024px;height:2px;background:#d4d0c8"></div><div class="abs" style="left:0;top:652px;width:1024px;height:1px;background:#404040"></div><div class="abs" style="left:0;top:653px;width:1024px;height:1px;background:#808080"></div>
<div class="abs" style="left:0;top:654px;width:1024px;height:62px;background:#d4d0c8"></div>
<div class="abs" style="left:16px;top:658px;width:984px;height:39px;background:#fff;border-top:2px solid;border-top-color:#404040;border-left:2px solid #404040"></div>
<div class="abs" style="left:16px;top:696px;width:922px;height:17px;background:#fff;border-top:1px solid #808080;border-left:2px solid #404040;border-bottom:1px solid #d4d0c8"></div>
<div class="abs cmd" style="left:19px;top:661px">栅格太密，无法显示</div><div class="abs cmd" style="left:19px;top:674px">栅格太密，无法显示</div>
<div class="abs raised" style="left:1000px;top:660px;width:17px;height:17px"></div><svg class="abs" style="left:1000px;top:660px" width="16" height="16"><polygon points="4.5,9.5 8,6 11.5,9.5" fill="#000"/></svg>
<div class="abs raised" style="left:1000px;top:679px;width:17px;height:17px"></div><svg class="abs" style="left:1000px;top:679px" width="16" height="16"><polygon points="4.5,6.5 8,10 11.5,6.5" fill="#000"/></svg>
<div class="abs dither" style="left:953px;top:697px;width:30px;height:16px"></div><div class="abs raised" style="left:937px;top:697px;width:16px;height:16px"></div><svg class="abs" style="left:936.5px;top:697px" width="16" height="16"><polygon points="9.5,4.500 6,8 9.5,11.500" fill="#000"/></svg>
<div class="abs raised" style="left:983px;top:697px;width:16px;height:16px"></div><svg class="abs" style="left:982.5px;top:697px" width="16" height="16"><polygon points="6.5,4.500 10,8 6.5,11.500" fill="#000"/></svg>
<div class="abs raised" style="left:953px;top:697px;width:15px;height:16px"></div>
<div class="abs" style="left:0;top:713px;width:1024px;height:1px;background:#808080"></div><div class="abs" style="left:0;top:714px;width:1024px;height:1px;background:#fff"></div>
<div class="abs" style="left:4px;top:718px;width:251px;height:19px;border:1px solid;border-color:#808080 #fff #fff #808080"></div><div class="abs mono" style="left:7px;top:720px;font-size:11.5px;letter-spacing:-0.9px;color:#808080;line-height:16px;white-space:pre;font-family:'Liberation Mono',monospace">10771.79, 2156.88, 0.00</div>
<div class="abs sb up" style="left:260px;width:28px">捕捉</div><div class="abs sb up" style="left:291px;width:28px">栅格</div><div class="abs sb dn" style="left:322px;width:30px">正交</div><div class="abs sb up" style="left:355px;width:28px">极轴</div><div class="abs sb dn" style="left:386px;width:54px">对象捕捉</div><div class="abs sb up" style="left:443px;width:52px">对象追踪</div><div class="abs sb up" style="left:499px;width:22px"><i>DYN</i></div><div class="abs sb up" style="left:525px;width:28px">线宽</div><div class="abs sb dn" style="left:556px;width:30px">模型</div><div class="abs sb up" style="left:609px;width:53px">选择锁定</div><div class="abs sb dn" style="left:664px;width:43px"><i>R-LOCK</i></div><div class="abs sb dn" style="left:709px;width:54px">自上而下</div>
<div class="abs" style="left:944px;top:718px;width:64px;height:20px;border:1px solid;border-color:#808080 #fff #fff #808080"></div><svg class="abs" style="left:946px;top:719px" width="62" height="18" viewBox="0 0 62 18"><path d="M4 12 Q2 5 9 3 L13 9 Q10 13 4 12Z" fill="#9ab4d4" stroke="#506888"/><path d="M8 12v3M4 16h9" stroke="#506888" stroke-width="1.5"/><path d="M9 7l4-4" stroke="#304868"/><rect x="24" y="2" width="14" height="14" fill="#1060d0"/><rect x="33" y="2" width="5" height="14" fill="#ffd800"/><path d="M26 9l5-4v3h5v2h-5v3z" fill="#ffe020"/><path d="M46 9V6a4 4 0 0 1 8 0v3" fill="none" stroke="#707880" stroke-width="2"/><rect x="43" y="8" width="14" height="9" rx="1" fill="#8c949c" stroke="#505860"/><path d="M44 11h12M44 14h12" stroke="#c8d0d8"/></svg><svg class="abs" style="left:1009px;top:726px" width="12" height="8"><polygon points="1,1 11,1 6,6" fill="#000"/></svg>
</div>
</body></html>
